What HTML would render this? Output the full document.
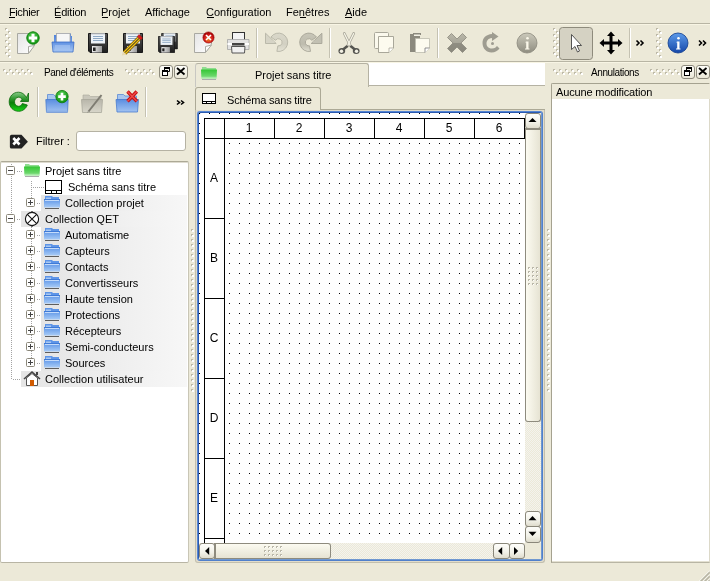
<!DOCTYPE html>
<html><head><meta charset="utf-8">
<style>
*{box-sizing:border-box;margin:0;padding:0}
html,body{width:710px;height:581px;overflow:hidden;background:#ECE9D8;font-family:"Liberation Sans",sans-serif;font-size:11px;color:#000;position:relative}
.a{position:absolute}
.t{position:absolute;white-space:nowrap;line-height:13px;will-change:transform}
.u{position:absolute;height:1px;background:#000}
.ic{position:absolute;overflow:visible}
.vs{position:absolute;width:2px;border-left:1px solid #C5C2B2;border-right:1px solid #fff}
.hg{position:absolute;background-image:linear-gradient(135deg,#fff 0 40%,#C5C2B2 40% 60%,transparent 60%);background-size:3px 3px}
.btn{position:absolute;border:1px solid #8A877A;border-radius:3px;background:linear-gradient(#FEFEFB,#F2F1E8 60%,#DFDCCD)}
.chk{background-color:#F4F3EE;background-image:linear-gradient(45deg,#ECE9D8 25%,transparent 25%,transparent 75%,#ECE9D8 75%),linear-gradient(45deg,#ECE9D8 25%,transparent 25%,transparent 75%,#ECE9D8 75%);background-size:2px 2px;background-position:0 0,1px 1px}
</style></head><body>
<!-- menu -->
<div class="t" style="left:9px;top:6px;letter-spacing:-0.4px">Fichier</div><div class="u" style="left:9px;top:17px;width:6px"></div>
<div class="t" style="left:54px;top:6px;letter-spacing:-0.2px">Édition</div><div class="u" style="left:55px;top:17px;width:6px"></div>
<div class="t" style="left:101px;top:6px">Projet</div><div class="u" style="left:102px;top:17px;width:6px"></div>
<div class="t" style="left:145px;top:6px;letter-spacing:-0.1px">Affichage</div>
<div class="t" style="left:206px;top:6px">Configuration</div><div class="u" style="left:207px;top:17px;width:7px"></div>
<div class="t" style="left:286px;top:6px">Fenêtres</div><div class="u" style="left:300px;top:17px;width:6px"></div>
<div class="t" style="left:345px;top:6px">Aide</div><div class="u" style="left:345px;top:17px;width:7px"></div>
<div class="a" style="left:0;top:23px;width:710px;height:1px;background:#B8B5A4"></div>
<div class="a" style="left:0;top:24px;width:710px;height:1px;background:#F8F5E4"></div>
<div class="a" style="left:0;top:61px;width:710px;height:1px;background:#B8B5A4"></div>
<div class="a" style="left:0;top:62px;width:710px;height:1px;background:#F8F5E4"></div>
<!-- toolbar handles -->
<!-- separators -->
<div class="vs" style="left:256px;top:28px;height:30px"></div>
<div class="vs" style="left:329px;top:28px;height:30px"></div>
<div class="vs" style="left:437px;top:28px;height:30px"></div>
<div class="vs" style="left:629px;top:28px;height:30px"></div>
<svg class="a" style="left:0;top:0" width="710" height="90"><rect x="5" y="28" width="2" height="2" fill="#BDB9A8"/><rect x="6" y="29" width="2" height="2" fill="#fff"/><rect x="8" y="31" width="2" height="2" fill="#BDB9A8"/><rect x="9" y="32" width="2" height="2" fill="#fff"/><rect x="5" y="34" width="2" height="2" fill="#BDB9A8"/><rect x="6" y="35" width="2" height="2" fill="#fff"/><rect x="8" y="37" width="2" height="2" fill="#BDB9A8"/><rect x="9" y="38" width="2" height="2" fill="#fff"/><rect x="5" y="40" width="2" height="2" fill="#BDB9A8"/><rect x="6" y="41" width="2" height="2" fill="#fff"/><rect x="8" y="43" width="2" height="2" fill="#BDB9A8"/><rect x="9" y="44" width="2" height="2" fill="#fff"/><rect x="5" y="46" width="2" height="2" fill="#BDB9A8"/><rect x="6" y="47" width="2" height="2" fill="#fff"/><rect x="8" y="49" width="2" height="2" fill="#BDB9A8"/><rect x="9" y="50" width="2" height="2" fill="#fff"/><rect x="5" y="52" width="2" height="2" fill="#BDB9A8"/><rect x="6" y="53" width="2" height="2" fill="#fff"/><rect x="8" y="55" width="2" height="2" fill="#BDB9A8"/><rect x="9" y="56" width="2" height="2" fill="#fff"/><rect x="553" y="28" width="2" height="2" fill="#BDB9A8"/><rect x="554" y="29" width="2" height="2" fill="#fff"/><rect x="556" y="31" width="2" height="2" fill="#BDB9A8"/><rect x="557" y="32" width="2" height="2" fill="#fff"/><rect x="553" y="34" width="2" height="2" fill="#BDB9A8"/><rect x="554" y="35" width="2" height="2" fill="#fff"/><rect x="556" y="37" width="2" height="2" fill="#BDB9A8"/><rect x="557" y="38" width="2" height="2" fill="#fff"/><rect x="553" y="40" width="2" height="2" fill="#BDB9A8"/><rect x="554" y="41" width="2" height="2" fill="#fff"/><rect x="556" y="43" width="2" height="2" fill="#BDB9A8"/><rect x="557" y="44" width="2" height="2" fill="#fff"/><rect x="553" y="46" width="2" height="2" fill="#BDB9A8"/><rect x="554" y="47" width="2" height="2" fill="#fff"/><rect x="556" y="49" width="2" height="2" fill="#BDB9A8"/><rect x="557" y="50" width="2" height="2" fill="#fff"/><rect x="553" y="52" width="2" height="2" fill="#BDB9A8"/><rect x="554" y="53" width="2" height="2" fill="#fff"/><rect x="556" y="55" width="2" height="2" fill="#BDB9A8"/><rect x="557" y="56" width="2" height="2" fill="#fff"/><rect x="656" y="28" width="2" height="2" fill="#BDB9A8"/><rect x="657" y="29" width="2" height="2" fill="#fff"/><rect x="659" y="31" width="2" height="2" fill="#BDB9A8"/><rect x="660" y="32" width="2" height="2" fill="#fff"/><rect x="656" y="34" width="2" height="2" fill="#BDB9A8"/><rect x="657" y="35" width="2" height="2" fill="#fff"/><rect x="659" y="37" width="2" height="2" fill="#BDB9A8"/><rect x="660" y="38" width="2" height="2" fill="#fff"/><rect x="656" y="40" width="2" height="2" fill="#BDB9A8"/><rect x="657" y="41" width="2" height="2" fill="#fff"/><rect x="659" y="43" width="2" height="2" fill="#BDB9A8"/><rect x="660" y="44" width="2" height="2" fill="#fff"/><rect x="656" y="46" width="2" height="2" fill="#BDB9A8"/><rect x="657" y="47" width="2" height="2" fill="#fff"/><rect x="659" y="49" width="2" height="2" fill="#BDB9A8"/><rect x="660" y="50" width="2" height="2" fill="#fff"/><rect x="656" y="52" width="2" height="2" fill="#BDB9A8"/><rect x="657" y="53" width="2" height="2" fill="#fff"/><rect x="659" y="55" width="2" height="2" fill="#BDB9A8"/><rect x="660" y="56" width="2" height="2" fill="#fff"/><rect x="3" y="69" width="2" height="2" fill="#BDB9A8"/><rect x="4" y="70" width="2" height="2" fill="#fff"/><rect x="6" y="72" width="2" height="2" fill="#BDB9A8"/><rect x="7" y="73" width="2" height="2" fill="#fff"/><rect x="9" y="69" width="2" height="2" fill="#BDB9A8"/><rect x="10" y="70" width="2" height="2" fill="#fff"/><rect x="12" y="72" width="2" height="2" fill="#BDB9A8"/><rect x="13" y="73" width="2" height="2" fill="#fff"/><rect x="15" y="69" width="2" height="2" fill="#BDB9A8"/><rect x="16" y="70" width="2" height="2" fill="#fff"/><rect x="18" y="72" width="2" height="2" fill="#BDB9A8"/><rect x="19" y="73" width="2" height="2" fill="#fff"/><rect x="21" y="69" width="2" height="2" fill="#BDB9A8"/><rect x="22" y="70" width="2" height="2" fill="#fff"/><rect x="24" y="72" width="2" height="2" fill="#BDB9A8"/><rect x="25" y="73" width="2" height="2" fill="#fff"/><rect x="27" y="69" width="2" height="2" fill="#BDB9A8"/><rect x="28" y="70" width="2" height="2" fill="#fff"/><rect x="30" y="72" width="2" height="2" fill="#BDB9A8"/><rect x="31" y="73" width="2" height="2" fill="#fff"/><rect x="125" y="69" width="2" height="2" fill="#BDB9A8"/><rect x="126" y="70" width="2" height="2" fill="#fff"/><rect x="128" y="72" width="2" height="2" fill="#BDB9A8"/><rect x="129" y="73" width="2" height="2" fill="#fff"/><rect x="131" y="69" width="2" height="2" fill="#BDB9A8"/><rect x="132" y="70" width="2" height="2" fill="#fff"/><rect x="134" y="72" width="2" height="2" fill="#BDB9A8"/><rect x="135" y="73" width="2" height="2" fill="#fff"/><rect x="137" y="69" width="2" height="2" fill="#BDB9A8"/><rect x="138" y="70" width="2" height="2" fill="#fff"/><rect x="140" y="72" width="2" height="2" fill="#BDB9A8"/><rect x="141" y="73" width="2" height="2" fill="#fff"/><rect x="143" y="69" width="2" height="2" fill="#BDB9A8"/><rect x="144" y="70" width="2" height="2" fill="#fff"/><rect x="146" y="72" width="2" height="2" fill="#BDB9A8"/><rect x="147" y="73" width="2" height="2" fill="#fff"/><rect x="149" y="69" width="2" height="2" fill="#BDB9A8"/><rect x="150" y="70" width="2" height="2" fill="#fff"/><rect x="152" y="72" width="2" height="2" fill="#BDB9A8"/><rect x="153" y="73" width="2" height="2" fill="#fff"/><rect x="553" y="69" width="2" height="2" fill="#BDB9A8"/><rect x="554" y="70" width="2" height="2" fill="#fff"/><rect x="556" y="72" width="2" height="2" fill="#BDB9A8"/><rect x="557" y="73" width="2" height="2" fill="#fff"/><rect x="559" y="69" width="2" height="2" fill="#BDB9A8"/><rect x="560" y="70" width="2" height="2" fill="#fff"/><rect x="562" y="72" width="2" height="2" fill="#BDB9A8"/><rect x="563" y="73" width="2" height="2" fill="#fff"/><rect x="565" y="69" width="2" height="2" fill="#BDB9A8"/><rect x="566" y="70" width="2" height="2" fill="#fff"/><rect x="568" y="72" width="2" height="2" fill="#BDB9A8"/><rect x="569" y="73" width="2" height="2" fill="#fff"/><rect x="571" y="69" width="2" height="2" fill="#BDB9A8"/><rect x="572" y="70" width="2" height="2" fill="#fff"/><rect x="574" y="72" width="2" height="2" fill="#BDB9A8"/><rect x="575" y="73" width="2" height="2" fill="#fff"/><rect x="577" y="69" width="2" height="2" fill="#BDB9A8"/><rect x="578" y="70" width="2" height="2" fill="#fff"/><rect x="580" y="72" width="2" height="2" fill="#BDB9A8"/><rect x="581" y="73" width="2" height="2" fill="#fff"/><rect x="650" y="69" width="2" height="2" fill="#BDB9A8"/><rect x="651" y="70" width="2" height="2" fill="#fff"/><rect x="653" y="72" width="2" height="2" fill="#BDB9A8"/><rect x="654" y="73" width="2" height="2" fill="#fff"/><rect x="656" y="69" width="2" height="2" fill="#BDB9A8"/><rect x="657" y="70" width="2" height="2" fill="#fff"/><rect x="659" y="72" width="2" height="2" fill="#BDB9A8"/><rect x="660" y="73" width="2" height="2" fill="#fff"/><rect x="662" y="69" width="2" height="2" fill="#BDB9A8"/><rect x="663" y="70" width="2" height="2" fill="#fff"/><rect x="665" y="72" width="2" height="2" fill="#BDB9A8"/><rect x="666" y="73" width="2" height="2" fill="#fff"/><rect x="668" y="69" width="2" height="2" fill="#BDB9A8"/><rect x="669" y="70" width="2" height="2" fill="#fff"/><rect x="671" y="72" width="2" height="2" fill="#BDB9A8"/><rect x="672" y="73" width="2" height="2" fill="#fff"/><rect x="674" y="69" width="2" height="2" fill="#BDB9A8"/><rect x="675" y="70" width="2" height="2" fill="#fff"/><rect x="677" y="72" width="2" height="2" fill="#BDB9A8"/><rect x="678" y="73" width="2" height="2" fill="#fff"/></svg>
<svg class="a" style="left:0;top:0" width="710" height="120" viewBox="0 0 710 120">
<defs>
<linearGradient id="pg" x1="0" y1="0" x2="1" y2="1"><stop offset="0" stop-color="#E4E4E4"/><stop offset="1" stop-color="#FFFFFF"/></linearGradient>
<radialGradient id="gg" cx="0.45" cy="0.35" r="0.6"><stop offset="0" stop-color="#5DD35D"/><stop offset="1" stop-color="#129612"/></radialGradient>
<radialGradient id="rg" cx="0.5" cy="0.65" r="0.6"><stop offset="0" stop-color="#F08A20"/><stop offset="0.6" stop-color="#D42020"/><stop offset="1" stop-color="#A00000"/></radialGradient>
<linearGradient id="bf" x1="0" y1="0" x2="0" y2="1"><stop offset="0" stop-color="#5E90E2"/><stop offset="1" stop-color="#A9C8F4"/></linearGradient>
<linearGradient id="bfb" x1="0" y1="0" x2="0" y2="1"><stop offset="0" stop-color="#4A7FD8"/><stop offset="1" stop-color="#6F9BE6"/></linearGradient>
<linearGradient id="fl" x1="0" y1="0" x2="0" y2="1"><stop offset="0" stop-color="#555"/><stop offset="1" stop-color="#1E1E1E"/></linearGradient>
<linearGradient id="sh" x1="0" y1="0" x2="1" y2="0"><stop offset="0" stop-color="#F2F2F2"/><stop offset="1" stop-color="#9A9A9A"/></linearGradient>
<linearGradient id="gy" x1="0" y1="0" x2="0" y2="1"><stop offset="0" stop-color="#CBC9BB"/><stop offset="1" stop-color="#8F8D80"/></linearGradient>
<linearGradient id="gy2" x1="0" y1="0" x2="0" y2="1"><stop offset="0" stop-color="#B9B7A9"/><stop offset="0.5" stop-color="#A8A699"/><stop offset="0.5" stop-color="#8F8D82"/><stop offset="1" stop-color="#8A887C"/></linearGradient>
<linearGradient id="bl" x1="0" y1="0" x2="0" y2="1"><stop offset="0" stop-color="#5D9BEA"/><stop offset="1" stop-color="#1547A8"/></linearGradient>
<symbol id="floppy" viewBox="0 0 20 20">
<path d="M0.5 0.5H19.5V19.5H2L0.5 18Z" fill="url(#fl)" stroke="#1A1A1A" stroke-width="1"/>
<rect x="3" y="0.5" width="14" height="10" fill="#EEF3F8"/>
<rect x="3" y="0.5" width="14" height="1" fill="#C8CCD0"/>
<rect x="5" y="3" width="10" height="1" fill="#8FA9C4"/><rect x="5" y="5" width="10" height="1" fill="#8FA9C4"/><rect x="5" y="7" width="10" height="1" fill="#8FA9C4"/>
<rect x="4" y="13" width="10" height="6.5" fill="url(#sh)"/>
<rect x="5" y="14.5" width="2.6" height="3.5" fill="#222"/>
</symbol>
</defs>
<!-- new -->
<path d="M17.5 33.5H32L34.5 36V45L28.5 53.5H17.5Z" fill="url(#pg)" stroke="#A9A9A2" stroke-width="1"/>
<path d="M28.5 53.5L28.5 46.5L34.5 45.5Z" fill="#FDFDFD" stroke="#A9A9A2" stroke-width="1"/>
<circle cx="33" cy="38" r="6.2" fill="url(#gg)" stroke="#0A800A" stroke-width="1"/>
<path d="M33 33.8V42.2M28.8 38H37.2" stroke="#fff" stroke-width="3"/>
<!-- open -->
<path d="M54 35H57V33.5H71V36H72V43H54Z" fill="url(#bfb)"/>
<rect x="56.5" y="33.5" width="13.5" height="9.5" fill="#F6F6F6" stroke="#AAA" stroke-width="0.8"/>
<path d="M52 42H74L73 52H53Z" fill="url(#bf)" stroke="#3E6FC7" stroke-width="0.8"/>
<rect x="55" y="45" width="15" height="5" fill="#A9C7F2" opacity="0.6"/>
<!-- save -->
<use href="#floppy" x="88" y="33" width="20" height="20"/>
<!-- save as -->
<use href="#floppy" x="123" y="33" width="20" height="20"/>
<path d="M124.5 53L139 38.5" stroke="#6A5000" stroke-width="4.6" stroke-linecap="butt"/>
<path d="M124.5 53L139 38.5" stroke="#F2C21A" stroke-width="3.4"/>
<path d="M124.8 52.7L139.3 38.2" stroke="#1A1A1A" stroke-width="1"/>
<path d="M137.2 36.4L139.2 34.6L142.6 38L140.8 40Z" fill="#D81C1C" stroke="#901010" stroke-width="0.5"/>
<path d="M121.8 55.5L123 51.2L126.3 54.5Z" fill="#E8D9B0"/>
<!-- save all -->
<use href="#floppy" x="161" y="33" width="17" height="16.5"/>
<use href="#floppy" x="158" y="36" width="17" height="17"/>
<!-- close -->
<path d="M194.5 33.5H208L211.5 37V44L205.5 52.5H194.5Z" fill="url(#pg)" stroke="#A9A9A2" stroke-width="1"/>
<path d="M205.5 52.5L205.5 46.5L211.5 45Z" fill="#FDFDFD" stroke="#A9A9A2" stroke-width="1"/>
<circle cx="208.5" cy="37.5" r="5.6" fill="url(#rg)" stroke="#9A0000" stroke-width="0.6"/>
<path d="M206 35L211 40M211 35L206 40" stroke="#fff" stroke-width="1.6"/>
<!-- print -->
<rect x="232.5" y="32.5" width="12" height="9" fill="#F4F4F4" stroke="#333" stroke-width="1"/>
<path d="M227.5 39.5H249V49.5H227.5Z" fill="#E2E2E2" stroke="#A4A4A4" stroke-width="0.8"/>
<rect x="227.5" y="43" width="21.5" height="2" fill="#FFFFFF"/>
<rect x="232" y="43" width="12.5" height="2.5" fill="#444"/>
<path d="M231.5 46.5H245L244.5 53H232Z" fill="#F0F0F0" stroke="#555" stroke-width="1"/>
<!-- undo -->
<defs><linearGradient id="ug" x1="0" y1="0" x2="0" y2="1"><stop offset="0" stop-color="#DAD8CA"/><stop offset="0.6" stop-color="#D2D0C2"/><stop offset="1" stop-color="#E6E4D6"/></linearGradient><linearGradient id="rg2" x1="0" y1="0" x2="0" y2="1"><stop offset="0" stop-color="#C8C6B8"/><stop offset="0.6" stop-color="#BDBBAD"/><stop offset="1" stop-color="#E2E0D2"/></linearGradient></defs>
<path d="M270.96 37.02A9.2 9.2 0 1 1 276.90 51.36L277.87 45.85A3.6 3.6 0 1 0 275.55 40.24Z" fill="url(#ug)" stroke="#B6B4A6" stroke-width="0.9"/><path d="M265.5 33.2L265.5 43.5L276.2 43.5Z" fill="#D6D4C6" stroke="#B6B4A6" stroke-width="0.9" stroke-linejoin="round"/><path d="M268 41.5L274.5 41.5" stroke="#D6D4C6" stroke-width="2"/>
<!-- redo -->
<g transform="translate(587.4,0) scale(-1,1)"><path d="M270.96 37.02A9.2 9.2 0 1 1 276.90 51.36L277.87 45.85A3.6 3.6 0 1 0 275.55 40.24Z" fill="url(#rg2)" stroke="#A6A496" stroke-width="0.9"/><path d="M265.5 33.2L265.5 43.5L276.2 43.5Z" fill="#C2C0B2" stroke="#A6A496" stroke-width="0.9" stroke-linejoin="round"/><path d="M268 41.5L274.5 41.5" stroke="#C2C0B2" stroke-width="2"/></g>
<!-- cut -->
<path d="M344.3 33.5L350.5 46M353.7 33.5L347.5 46" stroke="#A9A79A" stroke-width="2.8" stroke-linecap="round"/>
<path d="M344.3 33.5L350.5 46M353.7 33.5L347.5 46" stroke="#FBF9EC" stroke-width="1.1" stroke-linecap="round"/>
<path d="M342.5 50L346.8 46.6M355.5 50L351.2 46.6" stroke="#555550" stroke-width="2.6" stroke-linecap="round"/>
<ellipse cx="341.8" cy="51" rx="3.4" ry="3" fill="#555550"/><ellipse cx="356.2" cy="51" rx="3.4" ry="3" fill="#555550"/>
<circle cx="341.5" cy="51.2" r="1.7" fill="#F2F0E4"/><circle cx="356.5" cy="51.2" r="1.7" fill="#F2F0E4"/>
<!-- copy -->
<rect x="374.5" y="32.5" width="14" height="16" rx="1" fill="#FBF9ED" stroke="#A9A79A" stroke-width="1"/>
<path d="M378.5 36.5H393.5V48L389 52.5H378.5Z" fill="#FDFBEF" stroke="#A9A79A" stroke-width="1"/>
<path d="M389 52.5V48H393.5" fill="#fff" stroke="#A9A79A" stroke-width="0.8"/>
<!-- paste -->
<rect x="410" y="34" width="10" height="18" fill="#8C8A7E"/>
<rect x="413" y="33" width="8" height="2" fill="#8C8A7E"/>
<rect x="414" y="34.5" width="6" height="1.5" fill="#F4F2E6"/>
<path d="M415.5 38.5H429.5V48L425 52.5H415.5Z" fill="#FDFBEF" stroke="#BDBBAE" stroke-width="0.8"/>
<path d="M425 52.5V48H429.5" fill="#fff" stroke="#777" stroke-width="0.8"/>
<!-- delete -->
<path d="M447.5 37.5L451.5 33.5L457 39L462.5 33.5L466.5 37.5L461 43L466.5 48.5L462.5 52.5L457 47L451.5 52.5L447.5 48.5L453 43Z" fill="url(#gy2)" stroke="#8B897D" stroke-width="0.8"/>
<!-- rotate -->
<path d="M492 34V38C487.5 38 486.5 42 486.5 43.5C486.5 47 489 48.5 492 48.5C495 48.5 496 47 497 46L499.5 48.5C498 50.5 495 52.5 491.5 52.5C486.5 52.5 482.5 48.5 482.5 43C482.5 38 486 34.5 492 34Z" fill="#9E9C90"/>
<path d="M492 32V41L498.5 36.5Z" fill="#9E9C90"/>
<circle cx="492.5" cy="43.5" r="1.5" fill="#9E9C90"/>
<!-- info grey -->
<circle cx="527" cy="43" r="10" fill="url(#gy)" stroke="#8A887C" stroke-width="0.8"/>
<path d="M526 41.5H528.5V48.5H529.5V49.5H525V48.5H526.2V42.5H525.2Z" fill="#FBF8EA"/>
<circle cx="527.5" cy="38.3" r="1.3" fill="#FBF8EA"/>
<!-- select toggle -->
<rect x="559.5" y="27.5" width="33" height="32" rx="3" fill="#D5D2C3" stroke="#8E8B7C" stroke-width="1"/>
<path d="M571.5 34.5V49.5L575 46.5L577.5 52L579.5 51L577 45.5H581.5Z" fill="#fff" stroke="#444" stroke-width="0.9" stroke-linejoin="round"/>
<!-- move -->
<path d="M611 31.5L615 36H612.5V41.5H618V39L622.5 43L618 47V44.5H612.5V50H615L611 54.5L607 50H609.5V44.5H604V47L599.5 43L604 39V41.5H609.5V36H607Z" fill="#000"/>
<!-- chevrons -->
<path d="M636.5 40.5L639 43L636.5 45.5M640.5 40.5L643 43L640.5 45.5" fill="none" stroke="#000" stroke-width="1.6"/>
<path d="M699 40.5L701.5 43L699 45.5M703 40.5L705.5 43L703 45.5" fill="none" stroke="#000" stroke-width="1.6"/>
<!-- info blue -->
<circle cx="678" cy="43" r="10" fill="url(#bl)" stroke="#0B3A8E" stroke-width="0.8"/>
<path d="M677 41.5H679.5V48.5H680.5V49.5H676V48.5H677.2V42.5H676.2Z" fill="#fff"/>
<circle cx="678.5" cy="38.3" r="1.3" fill="#fff"/>
</svg>
<!-- left dock title -->
<div class="t" style="left:44px;top:66px;font-size:10px;letter-spacing:-0.45px">Panel d'éléments</div>
<div class="t" style="left:591px;top:66px;font-size:10px;letter-spacing:-0.4px">Annulations</div>
<svg class="a" style="left:0;top:0" width="710" height="581">
<defs><linearGradient id="db" x1="0" y1="0" x2="0" y2="1"><stop offset="0" stop-color="#FFFFFB"/><stop offset="1" stop-color="#E9E6D6"/></linearGradient></defs>
<rect x="159.5" y="65.5" width="13" height="13" rx="2.5" fill="url(#db)" stroke="#8D8A7D"/>
<rect x="174.5" y="65.5" width="13" height="13" rx="2.5" fill="url(#db)" stroke="#8D8A7D"/>
<path d="M164.5 67.5H169.5V71.5H167.5M164.5 67.5V70" fill="none" stroke="#000" stroke-width="1"/><rect x="164" y="67" width="6" height="2" fill="#000"/>
<rect x="162.5" y="70.5" width="5" height="5" fill="#fff" stroke="#000" stroke-width="1"/><rect x="162" y="70" width="6" height="2" fill="#000"/>
<path d="M177 68L184.5 74.5M184.5 68L177 74.5" stroke="#000" stroke-width="1.8"/>
<!-- right dock buttons -->
<rect x="681.5" y="65.5" width="13" height="13" rx="2.5" fill="url(#db)" stroke="#8D8A7D"/>
<path d="M686.5 67.5H691.5V71.5H689.5M686.5 67.5V70" fill="none" stroke="#000" stroke-width="1"/><rect x="686" y="67" width="6" height="2" fill="#000"/>
<rect x="684.5" y="70.5" width="5" height="5" fill="#fff" stroke="#000" stroke-width="1"/><rect x="684" y="70" width="6" height="2" fill="#000"/>
<rect x="696.5" y="65.5" width="13" height="13" rx="2.5" fill="url(#db)" stroke="#8D8A7D"/>
<path d="M699 68L706.5 74.5M706.5 68L699 74.5" stroke="#000" stroke-width="1.8"/>
</svg>
<svg class="a" style="left:0;top:0" width="200" height="160">
<defs>
<linearGradient id="rf" x1="0" y1="0" x2="0" y2="1"><stop offset="0" stop-color="#8ACB8A"/><stop offset="0.3" stop-color="#3A9E3A"/><stop offset="0.55" stop-color="#0A7E0A"/><stop offset="1" stop-color="#16D616"/></linearGradient>
<linearGradient id="fb2" x1="0" y1="0" x2="0" y2="1"><stop offset="0" stop-color="#5B8EE0"/><stop offset="1" stop-color="#A2C3F2"/></linearGradient>
<linearGradient id="fgr" x1="0" y1="0" x2="0" y2="1"><stop offset="0" stop-color="#B8B6AA"/><stop offset="1" stop-color="#D8D6CA"/></linearGradient>
<radialGradient id="gg2" cx="0.45" cy="0.35" r="0.6"><stop offset="0" stop-color="#5DD35D"/><stop offset="1" stop-color="#129612"/></radialGradient>
</defs>
<!-- refresh -->
<path d="M26.5 97.5C24.5 94 21.5 92.2 18.5 92.2C13 92.2 9.2 96.5 9.2 101.8C9.2 107 13.3 111.3 18.5 111.3C23 111.3 26.2 108.2 27.3 105L22.3 103.5C21.6 105.3 20 106.3 18.5 106.3C16 106.3 14.5 104 14.5 101.8C14.5 99.3 16.3 97.2 18.6 97.2C20 97.2 21.3 98 22 99.3L20.5 101.5H28.5V93Z" fill="url(#rf)" stroke="#0A6A0A" stroke-width="0.8"/>
<!-- sep -->
<rect x="37" y="87" width="1" height="30" fill="#C5C2B2"/><rect x="38" y="87" width="1" height="30" fill="#fff"/>
<rect x="145" y="87" width="1" height="30" fill="#C5C2B2"/><rect x="146" y="87" width="1" height="30" fill="#fff"/>
<!-- folder + -->
<path d="M47.5 94.5H53.5L55 96H66.5V100H47.5Z" fill="#A9C6EE" stroke="#5C8BD6" stroke-width="0.8"/>
<path d="M45.8 99.5H68.2L67.5 112.3H46.5Z" fill="url(#fb2)" stroke="#4A7CCF" stroke-width="0.8"/>
<rect x="46.5" y="110.5" width="21" height="1.6" fill="#8AAFE6"/>
<circle cx="62" cy="96.6" r="6.2" fill="url(#gg2)" stroke="#0A7A0A" stroke-width="0.8"/>
<path d="M62 92.8V100.4M58.2 96.6H65.8" stroke="#fff" stroke-width="2.6"/>
<!-- grey folder edit -->
<path d="M83 95H89L90.5 96.5H101V100H83Z" fill="#C9C7BB" stroke="#AAA89C" stroke-width="0.6"/>
<path d="M81.5 99.5H102.5L101.5 112.5H82.5Z" fill="url(#fgr)" stroke="#AAA89C" stroke-width="0.8"/>
<path d="M88.5 111.5L101.5 95" stroke="#7E7C72" stroke-width="2"/>
<path d="M87.5 113L88.5 111" stroke="#9E9C92" stroke-width="1"/>
<!-- folder x -->
<path d="M117.5 94.5H123.5L125 96H136.5V100H117.5Z" fill="#A9C6EE" stroke="#5C8BD6" stroke-width="0.8"/>
<path d="M116 99.5H138.5L137.5 112H117Z" fill="url(#fb2)" stroke="#4A7CCF" stroke-width="0.8"/>
<path d="M127.5 91.5L136.8 101.2M136.8 91.5L127.5 101.2" stroke="#C80E0E" stroke-width="3.4"/><path d="M127.5 91.5L136.8 101.2M136.8 91.5L127.5 101.2" stroke="#EC4A4A" stroke-width="1.4"/>
<!-- chevron -->
<path d="M177 100.5L179.5 102.5L177 104.5M181 100.5L183.5 102.5L181 104.5" fill="none" stroke="#000" stroke-width="1.6"/>
<!-- clear filter -->
<path d="M11.5 134.8H21.5L27.9 141.7L21.5 148.6H11.5Q9.9 148.6 9.9 147V136.4Q9.9 134.8 11.5 134.8Z" fill="#222"/>
<path d="M13.3 138L19.5 144.5M19.5 138L13.3 144.5" stroke="#fff" stroke-width="2.6"/>
</svg>
<div class="t" style="left:36px;top:135px;letter-spacing:-0.05px">Filtrer :</div>
<div class="a" style="left:76px;top:131px;width:110px;height:20px;background:#fff;border:1px solid #B5B2A3;border-radius:3px"></div>
<!-- tree -->
<div class="a" style="left:0;top:161px;width:189px;height:402px;background:#fff;border:1px solid #ACA996;border-left-color:#C5C2B0;border-right-color:#C9C6B6;border-bottom-color:#B8B5A4;border-radius:2px;box-shadow:inset 0 1px 0 #DEDBCF"></div>
<svg class="a" style="left:0;top:0" width="710" height="581"><defs><linearGradient id="hl" x1="0" y1="0" x2="1" y2="0"><stop offset="0" stop-color="#E5E5E5"/><stop offset="1" stop-color="#F7F7F7"/></linearGradient><linearGradient id="tf" x1="0" y1="0" x2="0" y2="1"><stop offset="0" stop-color="#5B93E6"/><stop offset="1" stop-color="#A8CBF6"/></linearGradient><linearGradient id="tfg" x1="0" y1="0" x2="0" y2="1"><stop offset="0" stop-color="#34C634"/><stop offset="0.75" stop-color="#6ED86E"/><stop offset="0.8" stop-color="#9FE69F"/><stop offset="1" stop-color="#A8EAA8"/></linearGradient></defs><rect x="11" y="164" width="1" height="1" fill="#A3A3A3"/><rect x="11" y="166" width="1" height="1" fill="#A3A3A3"/><rect x="11" y="168" width="1" height="1" fill="#A3A3A3"/><rect x="11" y="170" width="1" height="1" fill="#A3A3A3"/><rect x="11" y="172" width="1" height="1" fill="#A3A3A3"/><rect x="11" y="174" width="1" height="1" fill="#A3A3A3"/><rect x="11" y="176" width="1" height="1" fill="#A3A3A3"/><rect x="11" y="178" width="1" height="1" fill="#A3A3A3"/><rect x="11" y="180" width="1" height="1" fill="#A3A3A3"/><rect x="11" y="182" width="1" height="1" fill="#A3A3A3"/><rect x="11" y="184" width="1" height="1" fill="#A3A3A3"/><rect x="11" y="186" width="1" height="1" fill="#A3A3A3"/><rect x="11" y="188" width="1" height="1" fill="#A3A3A3"/><rect x="11" y="190" width="1" height="1" fill="#A3A3A3"/><rect x="11" y="192" width="1" height="1" fill="#A3A3A3"/><rect x="11" y="194" width="1" height="1" fill="#A3A3A3"/><rect x="11" y="196" width="1" height="1" fill="#A3A3A3"/><rect x="11" y="198" width="1" height="1" fill="#A3A3A3"/><rect x="11" y="200" width="1" height="1" fill="#A3A3A3"/><rect x="11" y="202" width="1" height="1" fill="#A3A3A3"/><rect x="11" y="204" width="1" height="1" fill="#A3A3A3"/><rect x="11" y="206" width="1" height="1" fill="#A3A3A3"/><rect x="11" y="208" width="1" height="1" fill="#A3A3A3"/><rect x="11" y="210" width="1" height="1" fill="#A3A3A3"/><rect x="11" y="212" width="1" height="1" fill="#A3A3A3"/><rect x="11" y="214" width="1" height="1" fill="#A3A3A3"/><rect x="11" y="216" width="1" height="1" fill="#A3A3A3"/><rect x="11" y="218" width="1" height="1" fill="#A3A3A3"/><rect x="11" y="220" width="1" height="1" fill="#A3A3A3"/><rect x="11" y="222" width="1" height="1" fill="#A3A3A3"/><rect x="11" y="224" width="1" height="1" fill="#A3A3A3"/><rect x="11" y="226" width="1" height="1" fill="#A3A3A3"/><rect x="11" y="228" width="1" height="1" fill="#A3A3A3"/><rect x="11" y="230" width="1" height="1" fill="#A3A3A3"/><rect x="11" y="232" width="1" height="1" fill="#A3A3A3"/><rect x="11" y="234" width="1" height="1" fill="#A3A3A3"/><rect x="11" y="236" width="1" height="1" fill="#A3A3A3"/><rect x="11" y="238" width="1" height="1" fill="#A3A3A3"/><rect x="11" y="240" width="1" height="1" fill="#A3A3A3"/><rect x="11" y="242" width="1" height="1" fill="#A3A3A3"/><rect x="11" y="244" width="1" height="1" fill="#A3A3A3"/><rect x="11" y="246" width="1" height="1" fill="#A3A3A3"/><rect x="11" y="248" width="1" height="1" fill="#A3A3A3"/><rect x="11" y="250" width="1" height="1" fill="#A3A3A3"/><rect x="11" y="252" width="1" height="1" fill="#A3A3A3"/><rect x="11" y="254" width="1" height="1" fill="#A3A3A3"/><rect x="11" y="256" width="1" height="1" fill="#A3A3A3"/><rect x="11" y="258" width="1" height="1" fill="#A3A3A3"/><rect x="11" y="260" width="1" height="1" fill="#A3A3A3"/><rect x="11" y="262" width="1" height="1" fill="#A3A3A3"/><rect x="11" y="264" width="1" height="1" fill="#A3A3A3"/><rect x="11" y="266" width="1" height="1" fill="#A3A3A3"/><rect x="11" y="268" width="1" height="1" fill="#A3A3A3"/><rect x="11" y="270" width="1" height="1" fill="#A3A3A3"/><rect x="11" y="272" width="1" height="1" fill="#A3A3A3"/><rect x="11" y="274" width="1" height="1" fill="#A3A3A3"/><rect x="11" y="276" width="1" height="1" fill="#A3A3A3"/><rect x="11" y="278" width="1" height="1" fill="#A3A3A3"/><rect x="11" y="280" width="1" height="1" fill="#A3A3A3"/><rect x="11" y="282" width="1" height="1" fill="#A3A3A3"/><rect x="11" y="284" width="1" height="1" fill="#A3A3A3"/><rect x="11" y="286" width="1" height="1" fill="#A3A3A3"/><rect x="11" y="288" width="1" height="1" fill="#A3A3A3"/><rect x="11" y="290" width="1" height="1" fill="#A3A3A3"/><rect x="11" y="292" width="1" height="1" fill="#A3A3A3"/><rect x="11" y="294" width="1" height="1" fill="#A3A3A3"/><rect x="11" y="296" width="1" height="1" fill="#A3A3A3"/><rect x="11" y="298" width="1" height="1" fill="#A3A3A3"/><rect x="11" y="300" width="1" height="1" fill="#A3A3A3"/><rect x="11" y="302" width="1" height="1" fill="#A3A3A3"/><rect x="11" y="304" width="1" height="1" fill="#A3A3A3"/><rect x="11" y="306" width="1" height="1" fill="#A3A3A3"/><rect x="11" y="308" width="1" height="1" fill="#A3A3A3"/><rect x="11" y="310" width="1" height="1" fill="#A3A3A3"/><rect x="11" y="312" width="1" height="1" fill="#A3A3A3"/><rect x="11" y="314" width="1" height="1" fill="#A3A3A3"/><rect x="11" y="316" width="1" height="1" fill="#A3A3A3"/><rect x="11" y="318" width="1" height="1" fill="#A3A3A3"/><rect x="11" y="320" width="1" height="1" fill="#A3A3A3"/><rect x="11" y="322" width="1" height="1" fill="#A3A3A3"/><rect x="11" y="324" width="1" height="1" fill="#A3A3A3"/><rect x="11" y="326" width="1" height="1" fill="#A3A3A3"/><rect x="11" y="328" width="1" height="1" fill="#A3A3A3"/><rect x="11" y="330" width="1" height="1" fill="#A3A3A3"/><rect x="11" y="332" width="1" height="1" fill="#A3A3A3"/><rect x="11" y="334" width="1" height="1" fill="#A3A3A3"/><rect x="11" y="336" width="1" height="1" fill="#A3A3A3"/><rect x="11" y="338" width="1" height="1" fill="#A3A3A3"/><rect x="11" y="340" width="1" height="1" fill="#A3A3A3"/><rect x="11" y="342" width="1" height="1" fill="#A3A3A3"/><rect x="11" y="344" width="1" height="1" fill="#A3A3A3"/><rect x="11" y="346" width="1" height="1" fill="#A3A3A3"/><rect x="11" y="348" width="1" height="1" fill="#A3A3A3"/><rect x="11" y="350" width="1" height="1" fill="#A3A3A3"/><rect x="11" y="352" width="1" height="1" fill="#A3A3A3"/><rect x="11" y="354" width="1" height="1" fill="#A3A3A3"/><rect x="11" y="356" width="1" height="1" fill="#A3A3A3"/><rect x="11" y="358" width="1" height="1" fill="#A3A3A3"/><rect x="11" y="360" width="1" height="1" fill="#A3A3A3"/><rect x="11" y="362" width="1" height="1" fill="#A3A3A3"/><rect x="11" y="364" width="1" height="1" fill="#A3A3A3"/><rect x="11" y="366" width="1" height="1" fill="#A3A3A3"/><rect x="11" y="368" width="1" height="1" fill="#A3A3A3"/><rect x="11" y="370" width="1" height="1" fill="#A3A3A3"/><rect x="11" y="372" width="1" height="1" fill="#A3A3A3"/><rect x="11" y="374" width="1" height="1" fill="#A3A3A3"/><rect x="11" y="376" width="1" height="1" fill="#A3A3A3"/><rect x="11" y="378" width="1" height="1" fill="#A3A3A3"/><rect x="17" y="171" width="1" height="1" fill="#A3A3A3"/><rect x="19" y="171" width="1" height="1" fill="#A3A3A3"/><rect x="21" y="171" width="1" height="1" fill="#A3A3A3"/><rect x="17" y="219" width="1" height="1" fill="#A3A3A3"/><rect x="19" y="219" width="1" height="1" fill="#A3A3A3"/><rect x="21" y="219" width="1" height="1" fill="#A3A3A3"/><rect x="13" y="379" width="1" height="1" fill="#A3A3A3"/><rect x="15" y="379" width="1" height="1" fill="#A3A3A3"/><rect x="17" y="379" width="1" height="1" fill="#A3A3A3"/><rect x="19" y="379" width="1" height="1" fill="#A3A3A3"/><rect x="21" y="379" width="1" height="1" fill="#A3A3A3"/><rect x="31" y="181" width="1" height="1" fill="#A3A3A3"/><rect x="31" y="183" width="1" height="1" fill="#A3A3A3"/><rect x="31" y="185" width="1" height="1" fill="#A3A3A3"/><rect x="31" y="187" width="1" height="1" fill="#A3A3A3"/><rect x="31" y="189" width="1" height="1" fill="#A3A3A3"/><rect x="31" y="191" width="1" height="1" fill="#A3A3A3"/><rect x="31" y="193" width="1" height="1" fill="#A3A3A3"/><rect x="31" y="195" width="1" height="1" fill="#A3A3A3"/><rect x="31" y="197" width="1" height="1" fill="#A3A3A3"/><rect x="31" y="199" width="1" height="1" fill="#A3A3A3"/><rect x="31" y="201" width="1" height="1" fill="#A3A3A3"/><rect x="31" y="203" width="1" height="1" fill="#A3A3A3"/><rect x="31" y="227" width="1" height="1" fill="#A3A3A3"/><rect x="31" y="229" width="1" height="1" fill="#A3A3A3"/><rect x="31" y="231" width="1" height="1" fill="#A3A3A3"/><rect x="31" y="233" width="1" height="1" fill="#A3A3A3"/><rect x="31" y="235" width="1" height="1" fill="#A3A3A3"/><rect x="31" y="237" width="1" height="1" fill="#A3A3A3"/><rect x="31" y="239" width="1" height="1" fill="#A3A3A3"/><rect x="31" y="241" width="1" height="1" fill="#A3A3A3"/><rect x="31" y="243" width="1" height="1" fill="#A3A3A3"/><rect x="31" y="245" width="1" height="1" fill="#A3A3A3"/><rect x="31" y="247" width="1" height="1" fill="#A3A3A3"/><rect x="31" y="249" width="1" height="1" fill="#A3A3A3"/><rect x="31" y="251" width="1" height="1" fill="#A3A3A3"/><rect x="31" y="253" width="1" height="1" fill="#A3A3A3"/><rect x="31" y="255" width="1" height="1" fill="#A3A3A3"/><rect x="31" y="257" width="1" height="1" fill="#A3A3A3"/><rect x="31" y="259" width="1" height="1" fill="#A3A3A3"/><rect x="31" y="261" width="1" height="1" fill="#A3A3A3"/><rect x="31" y="263" width="1" height="1" fill="#A3A3A3"/><rect x="31" y="265" width="1" height="1" fill="#A3A3A3"/><rect x="31" y="267" width="1" height="1" fill="#A3A3A3"/><rect x="31" y="269" width="1" height="1" fill="#A3A3A3"/><rect x="31" y="271" width="1" height="1" fill="#A3A3A3"/><rect x="31" y="273" width="1" height="1" fill="#A3A3A3"/><rect x="31" y="275" width="1" height="1" fill="#A3A3A3"/><rect x="31" y="277" width="1" height="1" fill="#A3A3A3"/><rect x="31" y="279" width="1" height="1" fill="#A3A3A3"/><rect x="31" y="281" width="1" height="1" fill="#A3A3A3"/><rect x="31" y="283" width="1" height="1" fill="#A3A3A3"/><rect x="31" y="285" width="1" height="1" fill="#A3A3A3"/><rect x="31" y="287" width="1" height="1" fill="#A3A3A3"/><rect x="31" y="289" width="1" height="1" fill="#A3A3A3"/><rect x="31" y="291" width="1" height="1" fill="#A3A3A3"/><rect x="31" y="293" width="1" height="1" fill="#A3A3A3"/><rect x="31" y="295" width="1" height="1" fill="#A3A3A3"/><rect x="31" y="297" width="1" height="1" fill="#A3A3A3"/><rect x="31" y="299" width="1" height="1" fill="#A3A3A3"/><rect x="31" y="301" width="1" height="1" fill="#A3A3A3"/><rect x="31" y="303" width="1" height="1" fill="#A3A3A3"/><rect x="31" y="305" width="1" height="1" fill="#A3A3A3"/><rect x="31" y="307" width="1" height="1" fill="#A3A3A3"/><rect x="31" y="309" width="1" height="1" fill="#A3A3A3"/><rect x="31" y="311" width="1" height="1" fill="#A3A3A3"/><rect x="31" y="313" width="1" height="1" fill="#A3A3A3"/><rect x="31" y="315" width="1" height="1" fill="#A3A3A3"/><rect x="31" y="317" width="1" height="1" fill="#A3A3A3"/><rect x="31" y="319" width="1" height="1" fill="#A3A3A3"/><rect x="31" y="321" width="1" height="1" fill="#A3A3A3"/><rect x="31" y="323" width="1" height="1" fill="#A3A3A3"/><rect x="31" y="325" width="1" height="1" fill="#A3A3A3"/><rect x="31" y="327" width="1" height="1" fill="#A3A3A3"/><rect x="31" y="329" width="1" height="1" fill="#A3A3A3"/><rect x="31" y="331" width="1" height="1" fill="#A3A3A3"/><rect x="31" y="333" width="1" height="1" fill="#A3A3A3"/><rect x="31" y="335" width="1" height="1" fill="#A3A3A3"/><rect x="31" y="337" width="1" height="1" fill="#A3A3A3"/><rect x="31" y="339" width="1" height="1" fill="#A3A3A3"/><rect x="31" y="341" width="1" height="1" fill="#A3A3A3"/><rect x="31" y="343" width="1" height="1" fill="#A3A3A3"/><rect x="31" y="345" width="1" height="1" fill="#A3A3A3"/><rect x="31" y="347" width="1" height="1" fill="#A3A3A3"/><rect x="31" y="349" width="1" height="1" fill="#A3A3A3"/><rect x="31" y="351" width="1" height="1" fill="#A3A3A3"/><rect x="31" y="353" width="1" height="1" fill="#A3A3A3"/><rect x="31" y="355" width="1" height="1" fill="#A3A3A3"/><rect x="31" y="357" width="1" height="1" fill="#A3A3A3"/><rect x="31" y="359" width="1" height="1" fill="#A3A3A3"/><rect x="31" y="361" width="1" height="1" fill="#A3A3A3"/><rect x="31" y="363" width="1" height="1" fill="#A3A3A3"/><rect x="33" y="187" width="1" height="1" fill="#A3A3A3"/><rect x="35" y="187" width="1" height="1" fill="#A3A3A3"/><rect x="37" y="187" width="1" height="1" fill="#A3A3A3"/><rect x="39" y="187" width="1" height="1" fill="#A3A3A3"/><rect x="41" y="187" width="1" height="1" fill="#A3A3A3"/><rect x="43" y="187" width="1" height="1" fill="#A3A3A3"/><rect x="37" y="203" width="1" height="1" fill="#A3A3A3"/><rect x="39" y="203" width="1" height="1" fill="#A3A3A3"/><rect x="41" y="203" width="1" height="1" fill="#A3A3A3"/><rect x="37" y="235" width="1" height="1" fill="#A3A3A3"/><rect x="39" y="235" width="1" height="1" fill="#A3A3A3"/><rect x="41" y="235" width="1" height="1" fill="#A3A3A3"/><rect x="37" y="251" width="1" height="1" fill="#A3A3A3"/><rect x="39" y="251" width="1" height="1" fill="#A3A3A3"/><rect x="41" y="251" width="1" height="1" fill="#A3A3A3"/><rect x="37" y="267" width="1" height="1" fill="#A3A3A3"/><rect x="39" y="267" width="1" height="1" fill="#A3A3A3"/><rect x="41" y="267" width="1" height="1" fill="#A3A3A3"/><rect x="37" y="283" width="1" height="1" fill="#A3A3A3"/><rect x="39" y="283" width="1" height="1" fill="#A3A3A3"/><rect x="41" y="283" width="1" height="1" fill="#A3A3A3"/><rect x="37" y="299" width="1" height="1" fill="#A3A3A3"/><rect x="39" y="299" width="1" height="1" fill="#A3A3A3"/><rect x="41" y="299" width="1" height="1" fill="#A3A3A3"/><rect x="37" y="315" width="1" height="1" fill="#A3A3A3"/><rect x="39" y="315" width="1" height="1" fill="#A3A3A3"/><rect x="41" y="315" width="1" height="1" fill="#A3A3A3"/><rect x="37" y="331" width="1" height="1" fill="#A3A3A3"/><rect x="39" y="331" width="1" height="1" fill="#A3A3A3"/><rect x="41" y="331" width="1" height="1" fill="#A3A3A3"/><rect x="37" y="347" width="1" height="1" fill="#A3A3A3"/><rect x="39" y="347" width="1" height="1" fill="#A3A3A3"/><rect x="41" y="347" width="1" height="1" fill="#A3A3A3"/><rect x="37" y="363" width="1" height="1" fill="#A3A3A3"/><rect x="39" y="363" width="1" height="1" fill="#A3A3A3"/><rect x="41" y="363" width="1" height="1" fill="#A3A3A3"/><rect x="6.5" y="166.5" width="8" height="8" rx="1" fill="#fff" stroke="#8A877A" stroke-width="1"/><path d="M8 170.5H13" stroke="#444" stroke-width="1"/><path d="M25 164H29L30 165H39V167H25Z" fill="#8FDC8F"/><path d="M24 166.5H40L39.6 175.7H24.4Z" fill="url(#tfg)"/><rect x="25" y="176" width="14" height="1" fill="#ABABAB"/><rect x="45.5" y="180.5" width="16" height="13" fill="#fff" stroke="#000" stroke-width="1"/><path d="M45 190.5H62M51.5 190V194M56.5 190V194" stroke="#000" stroke-width="1"/><rect x="41" y="195" width="146" height="16" fill="url(#hl)"/><rect x="26.5" y="198.5" width="8" height="8" rx="1" fill="#fff" stroke="#8A877A" stroke-width="1"/><path d="M28 202.5H33" stroke="#444" stroke-width="1"/><path d="M30.5 200V205" stroke="#444" stroke-width="1"/><path d="M45 196H52L53 197H59V200H45Z" fill="#5E95E8"/><rect x="46" y="197.5" width="5" height="1.5" fill="#A9C9F2"/><path d="M44 199H60V207.5H44Z" fill="url(#tf)"/><rect x="44" y="199" width="16" height="1" fill="#3F7AD6"/><rect x="45" y="200" width="14" height="1" fill="#C4DBFA"/><rect x="45" y="208" width="14" height="1" fill="#5E5E5E"/><rect x="21" y="211" width="166" height="16" fill="url(#hl)"/><rect x="6.5" y="214.5" width="8" height="8" rx="1" fill="#fff" stroke="#8A877A" stroke-width="1"/><path d="M8 218.5H13" stroke="#444" stroke-width="1"/><circle cx="32" cy="219" r="6.6" fill="#fff" stroke="#111" stroke-width="1.1"/><path d="M27.3 214.3L36.7 223.7M36.7 214.3L27.3 223.7" stroke="#111" stroke-width="1.1"/><path d="M30.5 212.6L32 211.4L33.5 212.6ZM30.5 225.4L32 226.6L33.5 225.4Z" fill="#222" stroke="#222" stroke-width="0.6"/><rect x="41" y="227" width="146" height="16" fill="url(#hl)"/><rect x="26.5" y="230.5" width="8" height="8" rx="1" fill="#fff" stroke="#8A877A" stroke-width="1"/><path d="M28 234.5H33" stroke="#444" stroke-width="1"/><path d="M30.5 232V237" stroke="#444" stroke-width="1"/><path d="M45 228H52L53 229H59V232H45Z" fill="#5E95E8"/><rect x="46" y="229.5" width="5" height="1.5" fill="#A9C9F2"/><path d="M44 231H60V239.5H44Z" fill="url(#tf)"/><rect x="44" y="231" width="16" height="1" fill="#3F7AD6"/><rect x="45" y="232" width="14" height="1" fill="#C4DBFA"/><rect x="45" y="240" width="14" height="1" fill="#5E5E5E"/><rect x="41" y="243" width="146" height="16" fill="url(#hl)"/><rect x="26.5" y="246.5" width="8" height="8" rx="1" fill="#fff" stroke="#8A877A" stroke-width="1"/><path d="M28 250.5H33" stroke="#444" stroke-width="1"/><path d="M30.5 248V253" stroke="#444" stroke-width="1"/><path d="M45 244H52L53 245H59V248H45Z" fill="#5E95E8"/><rect x="46" y="245.5" width="5" height="1.5" fill="#A9C9F2"/><path d="M44 247H60V255.5H44Z" fill="url(#tf)"/><rect x="44" y="247" width="16" height="1" fill="#3F7AD6"/><rect x="45" y="248" width="14" height="1" fill="#C4DBFA"/><rect x="45" y="256" width="14" height="1" fill="#5E5E5E"/><rect x="41" y="259" width="146" height="16" fill="url(#hl)"/><rect x="26.5" y="262.5" width="8" height="8" rx="1" fill="#fff" stroke="#8A877A" stroke-width="1"/><path d="M28 266.5H33" stroke="#444" stroke-width="1"/><path d="M30.5 264V269" stroke="#444" stroke-width="1"/><path d="M45 260H52L53 261H59V264H45Z" fill="#5E95E8"/><rect x="46" y="261.5" width="5" height="1.5" fill="#A9C9F2"/><path d="M44 263H60V271.5H44Z" fill="url(#tf)"/><rect x="44" y="263" width="16" height="1" fill="#3F7AD6"/><rect x="45" y="264" width="14" height="1" fill="#C4DBFA"/><rect x="45" y="272" width="14" height="1" fill="#5E5E5E"/><rect x="41" y="275" width="146" height="16" fill="url(#hl)"/><rect x="26.5" y="278.5" width="8" height="8" rx="1" fill="#fff" stroke="#8A877A" stroke-width="1"/><path d="M28 282.5H33" stroke="#444" stroke-width="1"/><path d="M30.5 280V285" stroke="#444" stroke-width="1"/><path d="M45 276H52L53 277H59V280H45Z" fill="#5E95E8"/><rect x="46" y="277.5" width="5" height="1.5" fill="#A9C9F2"/><path d="M44 279H60V287.5H44Z" fill="url(#tf)"/><rect x="44" y="279" width="16" height="1" fill="#3F7AD6"/><rect x="45" y="280" width="14" height="1" fill="#C4DBFA"/><rect x="45" y="288" width="14" height="1" fill="#5E5E5E"/><rect x="41" y="291" width="146" height="16" fill="url(#hl)"/><rect x="26.5" y="294.5" width="8" height="8" rx="1" fill="#fff" stroke="#8A877A" stroke-width="1"/><path d="M28 298.5H33" stroke="#444" stroke-width="1"/><path d="M30.5 296V301" stroke="#444" stroke-width="1"/><path d="M45 292H52L53 293H59V296H45Z" fill="#5E95E8"/><rect x="46" y="293.5" width="5" height="1.5" fill="#A9C9F2"/><path d="M44 295H60V303.5H44Z" fill="url(#tf)"/><rect x="44" y="295" width="16" height="1" fill="#3F7AD6"/><rect x="45" y="296" width="14" height="1" fill="#C4DBFA"/><rect x="45" y="304" width="14" height="1" fill="#5E5E5E"/><rect x="41" y="307" width="146" height="16" fill="url(#hl)"/><rect x="26.5" y="310.5" width="8" height="8" rx="1" fill="#fff" stroke="#8A877A" stroke-width="1"/><path d="M28 314.5H33" stroke="#444" stroke-width="1"/><path d="M30.5 312V317" stroke="#444" stroke-width="1"/><path d="M45 308H52L53 309H59V312H45Z" fill="#5E95E8"/><rect x="46" y="309.5" width="5" height="1.5" fill="#A9C9F2"/><path d="M44 311H60V319.5H44Z" fill="url(#tf)"/><rect x="44" y="311" width="16" height="1" fill="#3F7AD6"/><rect x="45" y="312" width="14" height="1" fill="#C4DBFA"/><rect x="45" y="320" width="14" height="1" fill="#5E5E5E"/><rect x="41" y="323" width="146" height="16" fill="url(#hl)"/><rect x="26.5" y="326.5" width="8" height="8" rx="1" fill="#fff" stroke="#8A877A" stroke-width="1"/><path d="M28 330.5H33" stroke="#444" stroke-width="1"/><path d="M30.5 328V333" stroke="#444" stroke-width="1"/><path d="M45 324H52L53 325H59V328H45Z" fill="#5E95E8"/><rect x="46" y="325.5" width="5" height="1.5" fill="#A9C9F2"/><path d="M44 327H60V335.5H44Z" fill="url(#tf)"/><rect x="44" y="327" width="16" height="1" fill="#3F7AD6"/><rect x="45" y="328" width="14" height="1" fill="#C4DBFA"/><rect x="45" y="336" width="14" height="1" fill="#5E5E5E"/><rect x="41" y="339" width="146" height="16" fill="url(#hl)"/><rect x="26.5" y="342.5" width="8" height="8" rx="1" fill="#fff" stroke="#8A877A" stroke-width="1"/><path d="M28 346.5H33" stroke="#444" stroke-width="1"/><path d="M30.5 344V349" stroke="#444" stroke-width="1"/><path d="M45 340H52L53 341H59V344H45Z" fill="#5E95E8"/><rect x="46" y="341.5" width="5" height="1.5" fill="#A9C9F2"/><path d="M44 343H60V351.5H44Z" fill="url(#tf)"/><rect x="44" y="343" width="16" height="1" fill="#3F7AD6"/><rect x="45" y="344" width="14" height="1" fill="#C4DBFA"/><rect x="45" y="352" width="14" height="1" fill="#5E5E5E"/><rect x="41" y="355" width="146" height="16" fill="url(#hl)"/><rect x="26.5" y="358.5" width="8" height="8" rx="1" fill="#fff" stroke="#8A877A" stroke-width="1"/><path d="M28 362.5H33" stroke="#444" stroke-width="1"/><path d="M30.5 360V365" stroke="#444" stroke-width="1"/><path d="M45 356H52L53 357H59V360H45Z" fill="#5E95E8"/><rect x="46" y="357.5" width="5" height="1.5" fill="#A9C9F2"/><path d="M44 359H60V367.5H44Z" fill="url(#tf)"/><rect x="44" y="359" width="16" height="1" fill="#3F7AD6"/><rect x="45" y="360" width="14" height="1" fill="#C4DBFA"/><rect x="45" y="368" width="14" height="1" fill="#5E5E5E"/><rect x="21" y="371" width="166" height="16" fill="url(#hl)"/><path d="M24 379L32 372L40 379" fill="none" stroke="#444" stroke-width="1.6"/><path d="M26.5 378L32 373.5L37.5 378V385.5H26.5Z" fill="#fff" stroke="#555" stroke-width="1"/><rect x="30" y="380" width="4" height="6" fill="#D05A00"/><rect x="36" y="372" width="2" height="3" fill="#444"/></svg>
<div class="t" style="left:45px;top:165px">Projet sans titre</div>
<div class="t" style="left:68px;top:181px">Schéma sans titre</div>
<div class="t" style="left:65px;top:197px">Collection projet</div>
<div class="t" style="left:45px;top:213px">Collection QET</div>
<div class="t" style="left:65px;top:229px">Automatisme</div>
<div class="t" style="left:65px;top:245px">Capteurs</div>
<div class="t" style="left:65px;top:261px">Contacts</div>
<div class="t" style="left:65px;top:277px">Convertisseurs</div>
<div class="t" style="left:65px;top:293px">Haute tension</div>
<div class="t" style="left:65px;top:309px">Protections</div>
<div class="t" style="left:65px;top:325px">Récepteurs</div>
<div class="t" style="left:65px;top:341px">Semi-conducteurs</div>
<div class="t" style="left:65px;top:357px">Sources</div>
<div class="t" style="left:45px;top:373px">Collection utilisateur</div>
<div class="a" style="left:195px;top:109px;width:350px;height:454px;border:1px solid #ACA996;border-left-color:#C2BFAE;border-right-color:#C2BFAE;border-bottom-color:#C2BFAE;border-radius:0 0 3px 3px;background:#E2DDCB"></div>
<!-- center tabs -->
<div class="a" style="left:368px;top:63px;width:177px;height:23px;background:#fff;border-bottom:1px solid #B5B2A3"></div>
<div class="a" style="left:195px;top:63px;width:174px;height:24px;background:#ECE9D8;border:1px solid #B5B2A3;border-left-color:#C8C7C2;border-bottom:none;border-radius:3px 3px 0 0"></div>
<div class="t" style="left:255px;top:69px">Projet sans titre</div>
<div class="a" style="left:195px;top:87px;width:126px;height:23px;background:#ECE9D8;border:1px solid #ACA996;border-bottom:none;border-radius:3px 3px 0 0"></div>
<div class="a" style="left:321px;top:109px;width:224px;height:1px;background:#ACA996"></div>
<div class="t" style="left:227px;top:94px;letter-spacing:-0.2px">Schéma sans titre</div>
<svg class="a" style="left:0;top:0" width="710" height="120">
<defs><linearGradient id="tfg2" x1="0" y1="0" x2="0" y2="1"><stop offset="0" stop-color="#34C634"/><stop offset="0.75" stop-color="#6ED86E"/><stop offset="0.8" stop-color="#9FE69F"/><stop offset="1" stop-color="#A8EAA8"/></linearGradient></defs>
<path d="M202 67H206L207 68H216V70H202Z" fill="#8FDC8F"/><path d="M201 69.5H217L216.6 78.7H201.4Z" fill="url(#tfg2)"/><rect x="202" y="79" width="14" height="1" fill="#ABABAB"/>
<rect x="202.5" y="93.5" width="13" height="10" fill="#fff" stroke="#000"/>
<path d="M202 101.5H216M206.5 101V104M211.5 101V104" stroke="#000"/>
</svg>
<!-- canvas frame -->

<div class="a" style="left:197px;top:111px;width:346px;height:450px;border:1px solid #5585D2;border-right-color:#5080CC;border-bottom-color:#5080CC;box-shadow:inset 1px 1px 0 #2A5AB0,inset -1px -1px 0 #7098D0;background:#fff;border-radius:3px"></div>
<svg class="a" style="left:0;top:0" width="710" height="581"><path d="M199 113h1v1h-1zM199 123h1v1h-1zM199 133h1v1h-1zM199 143h1v1h-1zM199 153h1v1h-1zM199 163h1v1h-1zM199 173h1v1h-1zM199 183h1v1h-1zM199 193h1v1h-1zM199 203h1v1h-1zM199 213h1v1h-1zM199 223h1v1h-1zM199 233h1v1h-1zM199 243h1v1h-1zM199 253h1v1h-1zM199 263h1v1h-1zM199 273h1v1h-1zM199 283h1v1h-1zM199 293h1v1h-1zM199 303h1v1h-1zM199 313h1v1h-1zM199 323h1v1h-1zM199 333h1v1h-1zM199 343h1v1h-1zM199 353h1v1h-1zM199 363h1v1h-1zM199 373h1v1h-1zM199 383h1v1h-1zM199 393h1v1h-1zM199 403h1v1h-1zM199 413h1v1h-1zM199 423h1v1h-1zM199 433h1v1h-1zM199 443h1v1h-1zM199 453h1v1h-1zM199 463h1v1h-1zM199 473h1v1h-1zM199 483h1v1h-1zM199 493h1v1h-1zM199 503h1v1h-1zM199 513h1v1h-1zM199 523h1v1h-1zM199 533h1v1h-1zM199 543h1v1h-1zM209 113h1v1h-1zM209 123h1v1h-1zM209 133h1v1h-1zM209 143h1v1h-1zM209 153h1v1h-1zM209 163h1v1h-1zM209 173h1v1h-1zM209 183h1v1h-1zM209 193h1v1h-1zM209 203h1v1h-1zM209 213h1v1h-1zM209 223h1v1h-1zM209 233h1v1h-1zM209 243h1v1h-1zM209 253h1v1h-1zM209 263h1v1h-1zM209 273h1v1h-1zM209 283h1v1h-1zM209 293h1v1h-1zM209 303h1v1h-1zM209 313h1v1h-1zM209 323h1v1h-1zM209 333h1v1h-1zM209 343h1v1h-1zM209 353h1v1h-1zM209 363h1v1h-1zM209 373h1v1h-1zM209 383h1v1h-1zM209 393h1v1h-1zM209 403h1v1h-1zM209 413h1v1h-1zM209 423h1v1h-1zM209 433h1v1h-1zM209 443h1v1h-1zM209 453h1v1h-1zM209 463h1v1h-1zM209 473h1v1h-1zM209 483h1v1h-1zM209 493h1v1h-1zM209 503h1v1h-1zM209 513h1v1h-1zM209 523h1v1h-1zM209 533h1v1h-1zM209 543h1v1h-1zM219 113h1v1h-1zM219 123h1v1h-1zM219 133h1v1h-1zM219 143h1v1h-1zM219 153h1v1h-1zM219 163h1v1h-1zM219 173h1v1h-1zM219 183h1v1h-1zM219 193h1v1h-1zM219 203h1v1h-1zM219 213h1v1h-1zM219 223h1v1h-1zM219 233h1v1h-1zM219 243h1v1h-1zM219 253h1v1h-1zM219 263h1v1h-1zM219 273h1v1h-1zM219 283h1v1h-1zM219 293h1v1h-1zM219 303h1v1h-1zM219 313h1v1h-1zM219 323h1v1h-1zM219 333h1v1h-1zM219 343h1v1h-1zM219 353h1v1h-1zM219 363h1v1h-1zM219 373h1v1h-1zM219 383h1v1h-1zM219 393h1v1h-1zM219 403h1v1h-1zM219 413h1v1h-1zM219 423h1v1h-1zM219 433h1v1h-1zM219 443h1v1h-1zM219 453h1v1h-1zM219 463h1v1h-1zM219 473h1v1h-1zM219 483h1v1h-1zM219 493h1v1h-1zM219 503h1v1h-1zM219 513h1v1h-1zM219 523h1v1h-1zM219 533h1v1h-1zM219 543h1v1h-1zM229 113h1v1h-1zM229 123h1v1h-1zM229 133h1v1h-1zM229 143h1v1h-1zM229 153h1v1h-1zM229 163h1v1h-1zM229 173h1v1h-1zM229 183h1v1h-1zM229 193h1v1h-1zM229 203h1v1h-1zM229 213h1v1h-1zM229 223h1v1h-1zM229 233h1v1h-1zM229 243h1v1h-1zM229 253h1v1h-1zM229 263h1v1h-1zM229 273h1v1h-1zM229 283h1v1h-1zM229 293h1v1h-1zM229 303h1v1h-1zM229 313h1v1h-1zM229 323h1v1h-1zM229 333h1v1h-1zM229 343h1v1h-1zM229 353h1v1h-1zM229 363h1v1h-1zM229 373h1v1h-1zM229 383h1v1h-1zM229 393h1v1h-1zM229 403h1v1h-1zM229 413h1v1h-1zM229 423h1v1h-1zM229 433h1v1h-1zM229 443h1v1h-1zM229 453h1v1h-1zM229 463h1v1h-1zM229 473h1v1h-1zM229 483h1v1h-1zM229 493h1v1h-1zM229 503h1v1h-1zM229 513h1v1h-1zM229 523h1v1h-1zM229 533h1v1h-1zM229 543h1v1h-1zM239 113h1v1h-1zM239 123h1v1h-1zM239 133h1v1h-1zM239 143h1v1h-1zM239 153h1v1h-1zM239 163h1v1h-1zM239 173h1v1h-1zM239 183h1v1h-1zM239 193h1v1h-1zM239 203h1v1h-1zM239 213h1v1h-1zM239 223h1v1h-1zM239 233h1v1h-1zM239 243h1v1h-1zM239 253h1v1h-1zM239 263h1v1h-1zM239 273h1v1h-1zM239 283h1v1h-1zM239 293h1v1h-1zM239 303h1v1h-1zM239 313h1v1h-1zM239 323h1v1h-1zM239 333h1v1h-1zM239 343h1v1h-1zM239 353h1v1h-1zM239 363h1v1h-1zM239 373h1v1h-1zM239 383h1v1h-1zM239 393h1v1h-1zM239 403h1v1h-1zM239 413h1v1h-1zM239 423h1v1h-1zM239 433h1v1h-1zM239 443h1v1h-1zM239 453h1v1h-1zM239 463h1v1h-1zM239 473h1v1h-1zM239 483h1v1h-1zM239 493h1v1h-1zM239 503h1v1h-1zM239 513h1v1h-1zM239 523h1v1h-1zM239 533h1v1h-1zM239 543h1v1h-1zM249 113h1v1h-1zM249 123h1v1h-1zM249 133h1v1h-1zM249 143h1v1h-1zM249 153h1v1h-1zM249 163h1v1h-1zM249 173h1v1h-1zM249 183h1v1h-1zM249 193h1v1h-1zM249 203h1v1h-1zM249 213h1v1h-1zM249 223h1v1h-1zM249 233h1v1h-1zM249 243h1v1h-1zM249 253h1v1h-1zM249 263h1v1h-1zM249 273h1v1h-1zM249 283h1v1h-1zM249 293h1v1h-1zM249 303h1v1h-1zM249 313h1v1h-1zM249 323h1v1h-1zM249 333h1v1h-1zM249 343h1v1h-1zM249 353h1v1h-1zM249 363h1v1h-1zM249 373h1v1h-1zM249 383h1v1h-1zM249 393h1v1h-1zM249 403h1v1h-1zM249 413h1v1h-1zM249 423h1v1h-1zM249 433h1v1h-1zM249 443h1v1h-1zM249 453h1v1h-1zM249 463h1v1h-1zM249 473h1v1h-1zM249 483h1v1h-1zM249 493h1v1h-1zM249 503h1v1h-1zM249 513h1v1h-1zM249 523h1v1h-1zM249 533h1v1h-1zM249 543h1v1h-1zM259 113h1v1h-1zM259 123h1v1h-1zM259 133h1v1h-1zM259 143h1v1h-1zM259 153h1v1h-1zM259 163h1v1h-1zM259 173h1v1h-1zM259 183h1v1h-1zM259 193h1v1h-1zM259 203h1v1h-1zM259 213h1v1h-1zM259 223h1v1h-1zM259 233h1v1h-1zM259 243h1v1h-1zM259 253h1v1h-1zM259 263h1v1h-1zM259 273h1v1h-1zM259 283h1v1h-1zM259 293h1v1h-1zM259 303h1v1h-1zM259 313h1v1h-1zM259 323h1v1h-1zM259 333h1v1h-1zM259 343h1v1h-1zM259 353h1v1h-1zM259 363h1v1h-1zM259 373h1v1h-1zM259 383h1v1h-1zM259 393h1v1h-1zM259 403h1v1h-1zM259 413h1v1h-1zM259 423h1v1h-1zM259 433h1v1h-1zM259 443h1v1h-1zM259 453h1v1h-1zM259 463h1v1h-1zM259 473h1v1h-1zM259 483h1v1h-1zM259 493h1v1h-1zM259 503h1v1h-1zM259 513h1v1h-1zM259 523h1v1h-1zM259 533h1v1h-1zM259 543h1v1h-1zM269 113h1v1h-1zM269 123h1v1h-1zM269 133h1v1h-1zM269 143h1v1h-1zM269 153h1v1h-1zM269 163h1v1h-1zM269 173h1v1h-1zM269 183h1v1h-1zM269 193h1v1h-1zM269 203h1v1h-1zM269 213h1v1h-1zM269 223h1v1h-1zM269 233h1v1h-1zM269 243h1v1h-1zM269 253h1v1h-1zM269 263h1v1h-1zM269 273h1v1h-1zM269 283h1v1h-1zM269 293h1v1h-1zM269 303h1v1h-1zM269 313h1v1h-1zM269 323h1v1h-1zM269 333h1v1h-1zM269 343h1v1h-1zM269 353h1v1h-1zM269 363h1v1h-1zM269 373h1v1h-1zM269 383h1v1h-1zM269 393h1v1h-1zM269 403h1v1h-1zM269 413h1v1h-1zM269 423h1v1h-1zM269 433h1v1h-1zM269 443h1v1h-1zM269 453h1v1h-1zM269 463h1v1h-1zM269 473h1v1h-1zM269 483h1v1h-1zM269 493h1v1h-1zM269 503h1v1h-1zM269 513h1v1h-1zM269 523h1v1h-1zM269 533h1v1h-1zM269 543h1v1h-1zM279 113h1v1h-1zM279 123h1v1h-1zM279 133h1v1h-1zM279 143h1v1h-1zM279 153h1v1h-1zM279 163h1v1h-1zM279 173h1v1h-1zM279 183h1v1h-1zM279 193h1v1h-1zM279 203h1v1h-1zM279 213h1v1h-1zM279 223h1v1h-1zM279 233h1v1h-1zM279 243h1v1h-1zM279 253h1v1h-1zM279 263h1v1h-1zM279 273h1v1h-1zM279 283h1v1h-1zM279 293h1v1h-1zM279 303h1v1h-1zM279 313h1v1h-1zM279 323h1v1h-1zM279 333h1v1h-1zM279 343h1v1h-1zM279 353h1v1h-1zM279 363h1v1h-1zM279 373h1v1h-1zM279 383h1v1h-1zM279 393h1v1h-1zM279 403h1v1h-1zM279 413h1v1h-1zM279 423h1v1h-1zM279 433h1v1h-1zM279 443h1v1h-1zM279 453h1v1h-1zM279 463h1v1h-1zM279 473h1v1h-1zM279 483h1v1h-1zM279 493h1v1h-1zM279 503h1v1h-1zM279 513h1v1h-1zM279 523h1v1h-1zM279 533h1v1h-1zM279 543h1v1h-1zM289 113h1v1h-1zM289 123h1v1h-1zM289 133h1v1h-1zM289 143h1v1h-1zM289 153h1v1h-1zM289 163h1v1h-1zM289 173h1v1h-1zM289 183h1v1h-1zM289 193h1v1h-1zM289 203h1v1h-1zM289 213h1v1h-1zM289 223h1v1h-1zM289 233h1v1h-1zM289 243h1v1h-1zM289 253h1v1h-1zM289 263h1v1h-1zM289 273h1v1h-1zM289 283h1v1h-1zM289 293h1v1h-1zM289 303h1v1h-1zM289 313h1v1h-1zM289 323h1v1h-1zM289 333h1v1h-1zM289 343h1v1h-1zM289 353h1v1h-1zM289 363h1v1h-1zM289 373h1v1h-1zM289 383h1v1h-1zM289 393h1v1h-1zM289 403h1v1h-1zM289 413h1v1h-1zM289 423h1v1h-1zM289 433h1v1h-1zM289 443h1v1h-1zM289 453h1v1h-1zM289 463h1v1h-1zM289 473h1v1h-1zM289 483h1v1h-1zM289 493h1v1h-1zM289 503h1v1h-1zM289 513h1v1h-1zM289 523h1v1h-1zM289 533h1v1h-1zM289 543h1v1h-1zM299 113h1v1h-1zM299 123h1v1h-1zM299 133h1v1h-1zM299 143h1v1h-1zM299 153h1v1h-1zM299 163h1v1h-1zM299 173h1v1h-1zM299 183h1v1h-1zM299 193h1v1h-1zM299 203h1v1h-1zM299 213h1v1h-1zM299 223h1v1h-1zM299 233h1v1h-1zM299 243h1v1h-1zM299 253h1v1h-1zM299 263h1v1h-1zM299 273h1v1h-1zM299 283h1v1h-1zM299 293h1v1h-1zM299 303h1v1h-1zM299 313h1v1h-1zM299 323h1v1h-1zM299 333h1v1h-1zM299 343h1v1h-1zM299 353h1v1h-1zM299 363h1v1h-1zM299 373h1v1h-1zM299 383h1v1h-1zM299 393h1v1h-1zM299 403h1v1h-1zM299 413h1v1h-1zM299 423h1v1h-1zM299 433h1v1h-1zM299 443h1v1h-1zM299 453h1v1h-1zM299 463h1v1h-1zM299 473h1v1h-1zM299 483h1v1h-1zM299 493h1v1h-1zM299 503h1v1h-1zM299 513h1v1h-1zM299 523h1v1h-1zM299 533h1v1h-1zM299 543h1v1h-1zM309 113h1v1h-1zM309 123h1v1h-1zM309 133h1v1h-1zM309 143h1v1h-1zM309 153h1v1h-1zM309 163h1v1h-1zM309 173h1v1h-1zM309 183h1v1h-1zM309 193h1v1h-1zM309 203h1v1h-1zM309 213h1v1h-1zM309 223h1v1h-1zM309 233h1v1h-1zM309 243h1v1h-1zM309 253h1v1h-1zM309 263h1v1h-1zM309 273h1v1h-1zM309 283h1v1h-1zM309 293h1v1h-1zM309 303h1v1h-1zM309 313h1v1h-1zM309 323h1v1h-1zM309 333h1v1h-1zM309 343h1v1h-1zM309 353h1v1h-1zM309 363h1v1h-1zM309 373h1v1h-1zM309 383h1v1h-1zM309 393h1v1h-1zM309 403h1v1h-1zM309 413h1v1h-1zM309 423h1v1h-1zM309 433h1v1h-1zM309 443h1v1h-1zM309 453h1v1h-1zM309 463h1v1h-1zM309 473h1v1h-1zM309 483h1v1h-1zM309 493h1v1h-1zM309 503h1v1h-1zM309 513h1v1h-1zM309 523h1v1h-1zM309 533h1v1h-1zM309 543h1v1h-1zM319 113h1v1h-1zM319 123h1v1h-1zM319 133h1v1h-1zM319 143h1v1h-1zM319 153h1v1h-1zM319 163h1v1h-1zM319 173h1v1h-1zM319 183h1v1h-1zM319 193h1v1h-1zM319 203h1v1h-1zM319 213h1v1h-1zM319 223h1v1h-1zM319 233h1v1h-1zM319 243h1v1h-1zM319 253h1v1h-1zM319 263h1v1h-1zM319 273h1v1h-1zM319 283h1v1h-1zM319 293h1v1h-1zM319 303h1v1h-1zM319 313h1v1h-1zM319 323h1v1h-1zM319 333h1v1h-1zM319 343h1v1h-1zM319 353h1v1h-1zM319 363h1v1h-1zM319 373h1v1h-1zM319 383h1v1h-1zM319 393h1v1h-1zM319 403h1v1h-1zM319 413h1v1h-1zM319 423h1v1h-1zM319 433h1v1h-1zM319 443h1v1h-1zM319 453h1v1h-1zM319 463h1v1h-1zM319 473h1v1h-1zM319 483h1v1h-1zM319 493h1v1h-1zM319 503h1v1h-1zM319 513h1v1h-1zM319 523h1v1h-1zM319 533h1v1h-1zM319 543h1v1h-1zM329 113h1v1h-1zM329 123h1v1h-1zM329 133h1v1h-1zM329 143h1v1h-1zM329 153h1v1h-1zM329 163h1v1h-1zM329 173h1v1h-1zM329 183h1v1h-1zM329 193h1v1h-1zM329 203h1v1h-1zM329 213h1v1h-1zM329 223h1v1h-1zM329 233h1v1h-1zM329 243h1v1h-1zM329 253h1v1h-1zM329 263h1v1h-1zM329 273h1v1h-1zM329 283h1v1h-1zM329 293h1v1h-1zM329 303h1v1h-1zM329 313h1v1h-1zM329 323h1v1h-1zM329 333h1v1h-1zM329 343h1v1h-1zM329 353h1v1h-1zM329 363h1v1h-1zM329 373h1v1h-1zM329 383h1v1h-1zM329 393h1v1h-1zM329 403h1v1h-1zM329 413h1v1h-1zM329 423h1v1h-1zM329 433h1v1h-1zM329 443h1v1h-1zM329 453h1v1h-1zM329 463h1v1h-1zM329 473h1v1h-1zM329 483h1v1h-1zM329 493h1v1h-1zM329 503h1v1h-1zM329 513h1v1h-1zM329 523h1v1h-1zM329 533h1v1h-1zM329 543h1v1h-1zM339 113h1v1h-1zM339 123h1v1h-1zM339 133h1v1h-1zM339 143h1v1h-1zM339 153h1v1h-1zM339 163h1v1h-1zM339 173h1v1h-1zM339 183h1v1h-1zM339 193h1v1h-1zM339 203h1v1h-1zM339 213h1v1h-1zM339 223h1v1h-1zM339 233h1v1h-1zM339 243h1v1h-1zM339 253h1v1h-1zM339 263h1v1h-1zM339 273h1v1h-1zM339 283h1v1h-1zM339 293h1v1h-1zM339 303h1v1h-1zM339 313h1v1h-1zM339 323h1v1h-1zM339 333h1v1h-1zM339 343h1v1h-1zM339 353h1v1h-1zM339 363h1v1h-1zM339 373h1v1h-1zM339 383h1v1h-1zM339 393h1v1h-1zM339 403h1v1h-1zM339 413h1v1h-1zM339 423h1v1h-1zM339 433h1v1h-1zM339 443h1v1h-1zM339 453h1v1h-1zM339 463h1v1h-1zM339 473h1v1h-1zM339 483h1v1h-1zM339 493h1v1h-1zM339 503h1v1h-1zM339 513h1v1h-1zM339 523h1v1h-1zM339 533h1v1h-1zM339 543h1v1h-1zM349 113h1v1h-1zM349 123h1v1h-1zM349 133h1v1h-1zM349 143h1v1h-1zM349 153h1v1h-1zM349 163h1v1h-1zM349 173h1v1h-1zM349 183h1v1h-1zM349 193h1v1h-1zM349 203h1v1h-1zM349 213h1v1h-1zM349 223h1v1h-1zM349 233h1v1h-1zM349 243h1v1h-1zM349 253h1v1h-1zM349 263h1v1h-1zM349 273h1v1h-1zM349 283h1v1h-1zM349 293h1v1h-1zM349 303h1v1h-1zM349 313h1v1h-1zM349 323h1v1h-1zM349 333h1v1h-1zM349 343h1v1h-1zM349 353h1v1h-1zM349 363h1v1h-1zM349 373h1v1h-1zM349 383h1v1h-1zM349 393h1v1h-1zM349 403h1v1h-1zM349 413h1v1h-1zM349 423h1v1h-1zM349 433h1v1h-1zM349 443h1v1h-1zM349 453h1v1h-1zM349 463h1v1h-1zM349 473h1v1h-1zM349 483h1v1h-1zM349 493h1v1h-1zM349 503h1v1h-1zM349 513h1v1h-1zM349 523h1v1h-1zM349 533h1v1h-1zM349 543h1v1h-1zM359 113h1v1h-1zM359 123h1v1h-1zM359 133h1v1h-1zM359 143h1v1h-1zM359 153h1v1h-1zM359 163h1v1h-1zM359 173h1v1h-1zM359 183h1v1h-1zM359 193h1v1h-1zM359 203h1v1h-1zM359 213h1v1h-1zM359 223h1v1h-1zM359 233h1v1h-1zM359 243h1v1h-1zM359 253h1v1h-1zM359 263h1v1h-1zM359 273h1v1h-1zM359 283h1v1h-1zM359 293h1v1h-1zM359 303h1v1h-1zM359 313h1v1h-1zM359 323h1v1h-1zM359 333h1v1h-1zM359 343h1v1h-1zM359 353h1v1h-1zM359 363h1v1h-1zM359 373h1v1h-1zM359 383h1v1h-1zM359 393h1v1h-1zM359 403h1v1h-1zM359 413h1v1h-1zM359 423h1v1h-1zM359 433h1v1h-1zM359 443h1v1h-1zM359 453h1v1h-1zM359 463h1v1h-1zM359 473h1v1h-1zM359 483h1v1h-1zM359 493h1v1h-1zM359 503h1v1h-1zM359 513h1v1h-1zM359 523h1v1h-1zM359 533h1v1h-1zM359 543h1v1h-1zM369 113h1v1h-1zM369 123h1v1h-1zM369 133h1v1h-1zM369 143h1v1h-1zM369 153h1v1h-1zM369 163h1v1h-1zM369 173h1v1h-1zM369 183h1v1h-1zM369 193h1v1h-1zM369 203h1v1h-1zM369 213h1v1h-1zM369 223h1v1h-1zM369 233h1v1h-1zM369 243h1v1h-1zM369 253h1v1h-1zM369 263h1v1h-1zM369 273h1v1h-1zM369 283h1v1h-1zM369 293h1v1h-1zM369 303h1v1h-1zM369 313h1v1h-1zM369 323h1v1h-1zM369 333h1v1h-1zM369 343h1v1h-1zM369 353h1v1h-1zM369 363h1v1h-1zM369 373h1v1h-1zM369 383h1v1h-1zM369 393h1v1h-1zM369 403h1v1h-1zM369 413h1v1h-1zM369 423h1v1h-1zM369 433h1v1h-1zM369 443h1v1h-1zM369 453h1v1h-1zM369 463h1v1h-1zM369 473h1v1h-1zM369 483h1v1h-1zM369 493h1v1h-1zM369 503h1v1h-1zM369 513h1v1h-1zM369 523h1v1h-1zM369 533h1v1h-1zM369 543h1v1h-1zM379 113h1v1h-1zM379 123h1v1h-1zM379 133h1v1h-1zM379 143h1v1h-1zM379 153h1v1h-1zM379 163h1v1h-1zM379 173h1v1h-1zM379 183h1v1h-1zM379 193h1v1h-1zM379 203h1v1h-1zM379 213h1v1h-1zM379 223h1v1h-1zM379 233h1v1h-1zM379 243h1v1h-1zM379 253h1v1h-1zM379 263h1v1h-1zM379 273h1v1h-1zM379 283h1v1h-1zM379 293h1v1h-1zM379 303h1v1h-1zM379 313h1v1h-1zM379 323h1v1h-1zM379 333h1v1h-1zM379 343h1v1h-1zM379 353h1v1h-1zM379 363h1v1h-1zM379 373h1v1h-1zM379 383h1v1h-1zM379 393h1v1h-1zM379 403h1v1h-1zM379 413h1v1h-1zM379 423h1v1h-1zM379 433h1v1h-1zM379 443h1v1h-1zM379 453h1v1h-1zM379 463h1v1h-1zM379 473h1v1h-1zM379 483h1v1h-1zM379 493h1v1h-1zM379 503h1v1h-1zM379 513h1v1h-1zM379 523h1v1h-1zM379 533h1v1h-1zM379 543h1v1h-1zM389 113h1v1h-1zM389 123h1v1h-1zM389 133h1v1h-1zM389 143h1v1h-1zM389 153h1v1h-1zM389 163h1v1h-1zM389 173h1v1h-1zM389 183h1v1h-1zM389 193h1v1h-1zM389 203h1v1h-1zM389 213h1v1h-1zM389 223h1v1h-1zM389 233h1v1h-1zM389 243h1v1h-1zM389 253h1v1h-1zM389 263h1v1h-1zM389 273h1v1h-1zM389 283h1v1h-1zM389 293h1v1h-1zM389 303h1v1h-1zM389 313h1v1h-1zM389 323h1v1h-1zM389 333h1v1h-1zM389 343h1v1h-1zM389 353h1v1h-1zM389 363h1v1h-1zM389 373h1v1h-1zM389 383h1v1h-1zM389 393h1v1h-1zM389 403h1v1h-1zM389 413h1v1h-1zM389 423h1v1h-1zM389 433h1v1h-1zM389 443h1v1h-1zM389 453h1v1h-1zM389 463h1v1h-1zM389 473h1v1h-1zM389 483h1v1h-1zM389 493h1v1h-1zM389 503h1v1h-1zM389 513h1v1h-1zM389 523h1v1h-1zM389 533h1v1h-1zM389 543h1v1h-1zM399 113h1v1h-1zM399 123h1v1h-1zM399 133h1v1h-1zM399 143h1v1h-1zM399 153h1v1h-1zM399 163h1v1h-1zM399 173h1v1h-1zM399 183h1v1h-1zM399 193h1v1h-1zM399 203h1v1h-1zM399 213h1v1h-1zM399 223h1v1h-1zM399 233h1v1h-1zM399 243h1v1h-1zM399 253h1v1h-1zM399 263h1v1h-1zM399 273h1v1h-1zM399 283h1v1h-1zM399 293h1v1h-1zM399 303h1v1h-1zM399 313h1v1h-1zM399 323h1v1h-1zM399 333h1v1h-1zM399 343h1v1h-1zM399 353h1v1h-1zM399 363h1v1h-1zM399 373h1v1h-1zM399 383h1v1h-1zM399 393h1v1h-1zM399 403h1v1h-1zM399 413h1v1h-1zM399 423h1v1h-1zM399 433h1v1h-1zM399 443h1v1h-1zM399 453h1v1h-1zM399 463h1v1h-1zM399 473h1v1h-1zM399 483h1v1h-1zM399 493h1v1h-1zM399 503h1v1h-1zM399 513h1v1h-1zM399 523h1v1h-1zM399 533h1v1h-1zM399 543h1v1h-1zM409 113h1v1h-1zM409 123h1v1h-1zM409 133h1v1h-1zM409 143h1v1h-1zM409 153h1v1h-1zM409 163h1v1h-1zM409 173h1v1h-1zM409 183h1v1h-1zM409 193h1v1h-1zM409 203h1v1h-1zM409 213h1v1h-1zM409 223h1v1h-1zM409 233h1v1h-1zM409 243h1v1h-1zM409 253h1v1h-1zM409 263h1v1h-1zM409 273h1v1h-1zM409 283h1v1h-1zM409 293h1v1h-1zM409 303h1v1h-1zM409 313h1v1h-1zM409 323h1v1h-1zM409 333h1v1h-1zM409 343h1v1h-1zM409 353h1v1h-1zM409 363h1v1h-1zM409 373h1v1h-1zM409 383h1v1h-1zM409 393h1v1h-1zM409 403h1v1h-1zM409 413h1v1h-1zM409 423h1v1h-1zM409 433h1v1h-1zM409 443h1v1h-1zM409 453h1v1h-1zM409 463h1v1h-1zM409 473h1v1h-1zM409 483h1v1h-1zM409 493h1v1h-1zM409 503h1v1h-1zM409 513h1v1h-1zM409 523h1v1h-1zM409 533h1v1h-1zM409 543h1v1h-1zM419 113h1v1h-1zM419 123h1v1h-1zM419 133h1v1h-1zM419 143h1v1h-1zM419 153h1v1h-1zM419 163h1v1h-1zM419 173h1v1h-1zM419 183h1v1h-1zM419 193h1v1h-1zM419 203h1v1h-1zM419 213h1v1h-1zM419 223h1v1h-1zM419 233h1v1h-1zM419 243h1v1h-1zM419 253h1v1h-1zM419 263h1v1h-1zM419 273h1v1h-1zM419 283h1v1h-1zM419 293h1v1h-1zM419 303h1v1h-1zM419 313h1v1h-1zM419 323h1v1h-1zM419 333h1v1h-1zM419 343h1v1h-1zM419 353h1v1h-1zM419 363h1v1h-1zM419 373h1v1h-1zM419 383h1v1h-1zM419 393h1v1h-1zM419 403h1v1h-1zM419 413h1v1h-1zM419 423h1v1h-1zM419 433h1v1h-1zM419 443h1v1h-1zM419 453h1v1h-1zM419 463h1v1h-1zM419 473h1v1h-1zM419 483h1v1h-1zM419 493h1v1h-1zM419 503h1v1h-1zM419 513h1v1h-1zM419 523h1v1h-1zM419 533h1v1h-1zM419 543h1v1h-1zM429 113h1v1h-1zM429 123h1v1h-1zM429 133h1v1h-1zM429 143h1v1h-1zM429 153h1v1h-1zM429 163h1v1h-1zM429 173h1v1h-1zM429 183h1v1h-1zM429 193h1v1h-1zM429 203h1v1h-1zM429 213h1v1h-1zM429 223h1v1h-1zM429 233h1v1h-1zM429 243h1v1h-1zM429 253h1v1h-1zM429 263h1v1h-1zM429 273h1v1h-1zM429 283h1v1h-1zM429 293h1v1h-1zM429 303h1v1h-1zM429 313h1v1h-1zM429 323h1v1h-1zM429 333h1v1h-1zM429 343h1v1h-1zM429 353h1v1h-1zM429 363h1v1h-1zM429 373h1v1h-1zM429 383h1v1h-1zM429 393h1v1h-1zM429 403h1v1h-1zM429 413h1v1h-1zM429 423h1v1h-1zM429 433h1v1h-1zM429 443h1v1h-1zM429 453h1v1h-1zM429 463h1v1h-1zM429 473h1v1h-1zM429 483h1v1h-1zM429 493h1v1h-1zM429 503h1v1h-1zM429 513h1v1h-1zM429 523h1v1h-1zM429 533h1v1h-1zM429 543h1v1h-1zM439 113h1v1h-1zM439 123h1v1h-1zM439 133h1v1h-1zM439 143h1v1h-1zM439 153h1v1h-1zM439 163h1v1h-1zM439 173h1v1h-1zM439 183h1v1h-1zM439 193h1v1h-1zM439 203h1v1h-1zM439 213h1v1h-1zM439 223h1v1h-1zM439 233h1v1h-1zM439 243h1v1h-1zM439 253h1v1h-1zM439 263h1v1h-1zM439 273h1v1h-1zM439 283h1v1h-1zM439 293h1v1h-1zM439 303h1v1h-1zM439 313h1v1h-1zM439 323h1v1h-1zM439 333h1v1h-1zM439 343h1v1h-1zM439 353h1v1h-1zM439 363h1v1h-1zM439 373h1v1h-1zM439 383h1v1h-1zM439 393h1v1h-1zM439 403h1v1h-1zM439 413h1v1h-1zM439 423h1v1h-1zM439 433h1v1h-1zM439 443h1v1h-1zM439 453h1v1h-1zM439 463h1v1h-1zM439 473h1v1h-1zM439 483h1v1h-1zM439 493h1v1h-1zM439 503h1v1h-1zM439 513h1v1h-1zM439 523h1v1h-1zM439 533h1v1h-1zM439 543h1v1h-1zM449 113h1v1h-1zM449 123h1v1h-1zM449 133h1v1h-1zM449 143h1v1h-1zM449 153h1v1h-1zM449 163h1v1h-1zM449 173h1v1h-1zM449 183h1v1h-1zM449 193h1v1h-1zM449 203h1v1h-1zM449 213h1v1h-1zM449 223h1v1h-1zM449 233h1v1h-1zM449 243h1v1h-1zM449 253h1v1h-1zM449 263h1v1h-1zM449 273h1v1h-1zM449 283h1v1h-1zM449 293h1v1h-1zM449 303h1v1h-1zM449 313h1v1h-1zM449 323h1v1h-1zM449 333h1v1h-1zM449 343h1v1h-1zM449 353h1v1h-1zM449 363h1v1h-1zM449 373h1v1h-1zM449 383h1v1h-1zM449 393h1v1h-1zM449 403h1v1h-1zM449 413h1v1h-1zM449 423h1v1h-1zM449 433h1v1h-1zM449 443h1v1h-1zM449 453h1v1h-1zM449 463h1v1h-1zM449 473h1v1h-1zM449 483h1v1h-1zM449 493h1v1h-1zM449 503h1v1h-1zM449 513h1v1h-1zM449 523h1v1h-1zM449 533h1v1h-1zM449 543h1v1h-1zM459 113h1v1h-1zM459 123h1v1h-1zM459 133h1v1h-1zM459 143h1v1h-1zM459 153h1v1h-1zM459 163h1v1h-1zM459 173h1v1h-1zM459 183h1v1h-1zM459 193h1v1h-1zM459 203h1v1h-1zM459 213h1v1h-1zM459 223h1v1h-1zM459 233h1v1h-1zM459 243h1v1h-1zM459 253h1v1h-1zM459 263h1v1h-1zM459 273h1v1h-1zM459 283h1v1h-1zM459 293h1v1h-1zM459 303h1v1h-1zM459 313h1v1h-1zM459 323h1v1h-1zM459 333h1v1h-1zM459 343h1v1h-1zM459 353h1v1h-1zM459 363h1v1h-1zM459 373h1v1h-1zM459 383h1v1h-1zM459 393h1v1h-1zM459 403h1v1h-1zM459 413h1v1h-1zM459 423h1v1h-1zM459 433h1v1h-1zM459 443h1v1h-1zM459 453h1v1h-1zM459 463h1v1h-1zM459 473h1v1h-1zM459 483h1v1h-1zM459 493h1v1h-1zM459 503h1v1h-1zM459 513h1v1h-1zM459 523h1v1h-1zM459 533h1v1h-1zM459 543h1v1h-1zM469 113h1v1h-1zM469 123h1v1h-1zM469 133h1v1h-1zM469 143h1v1h-1zM469 153h1v1h-1zM469 163h1v1h-1zM469 173h1v1h-1zM469 183h1v1h-1zM469 193h1v1h-1zM469 203h1v1h-1zM469 213h1v1h-1zM469 223h1v1h-1zM469 233h1v1h-1zM469 243h1v1h-1zM469 253h1v1h-1zM469 263h1v1h-1zM469 273h1v1h-1zM469 283h1v1h-1zM469 293h1v1h-1zM469 303h1v1h-1zM469 313h1v1h-1zM469 323h1v1h-1zM469 333h1v1h-1zM469 343h1v1h-1zM469 353h1v1h-1zM469 363h1v1h-1zM469 373h1v1h-1zM469 383h1v1h-1zM469 393h1v1h-1zM469 403h1v1h-1zM469 413h1v1h-1zM469 423h1v1h-1zM469 433h1v1h-1zM469 443h1v1h-1zM469 453h1v1h-1zM469 463h1v1h-1zM469 473h1v1h-1zM469 483h1v1h-1zM469 493h1v1h-1zM469 503h1v1h-1zM469 513h1v1h-1zM469 523h1v1h-1zM469 533h1v1h-1zM469 543h1v1h-1zM479 113h1v1h-1zM479 123h1v1h-1zM479 133h1v1h-1zM479 143h1v1h-1zM479 153h1v1h-1zM479 163h1v1h-1zM479 173h1v1h-1zM479 183h1v1h-1zM479 193h1v1h-1zM479 203h1v1h-1zM479 213h1v1h-1zM479 223h1v1h-1zM479 233h1v1h-1zM479 243h1v1h-1zM479 253h1v1h-1zM479 263h1v1h-1zM479 273h1v1h-1zM479 283h1v1h-1zM479 293h1v1h-1zM479 303h1v1h-1zM479 313h1v1h-1zM479 323h1v1h-1zM479 333h1v1h-1zM479 343h1v1h-1zM479 353h1v1h-1zM479 363h1v1h-1zM479 373h1v1h-1zM479 383h1v1h-1zM479 393h1v1h-1zM479 403h1v1h-1zM479 413h1v1h-1zM479 423h1v1h-1zM479 433h1v1h-1zM479 443h1v1h-1zM479 453h1v1h-1zM479 463h1v1h-1zM479 473h1v1h-1zM479 483h1v1h-1zM479 493h1v1h-1zM479 503h1v1h-1zM479 513h1v1h-1zM479 523h1v1h-1zM479 533h1v1h-1zM479 543h1v1h-1zM489 113h1v1h-1zM489 123h1v1h-1zM489 133h1v1h-1zM489 143h1v1h-1zM489 153h1v1h-1zM489 163h1v1h-1zM489 173h1v1h-1zM489 183h1v1h-1zM489 193h1v1h-1zM489 203h1v1h-1zM489 213h1v1h-1zM489 223h1v1h-1zM489 233h1v1h-1zM489 243h1v1h-1zM489 253h1v1h-1zM489 263h1v1h-1zM489 273h1v1h-1zM489 283h1v1h-1zM489 293h1v1h-1zM489 303h1v1h-1zM489 313h1v1h-1zM489 323h1v1h-1zM489 333h1v1h-1zM489 343h1v1h-1zM489 353h1v1h-1zM489 363h1v1h-1zM489 373h1v1h-1zM489 383h1v1h-1zM489 393h1v1h-1zM489 403h1v1h-1zM489 413h1v1h-1zM489 423h1v1h-1zM489 433h1v1h-1zM489 443h1v1h-1zM489 453h1v1h-1zM489 463h1v1h-1zM489 473h1v1h-1zM489 483h1v1h-1zM489 493h1v1h-1zM489 503h1v1h-1zM489 513h1v1h-1zM489 523h1v1h-1zM489 533h1v1h-1zM489 543h1v1h-1zM499 113h1v1h-1zM499 123h1v1h-1zM499 133h1v1h-1zM499 143h1v1h-1zM499 153h1v1h-1zM499 163h1v1h-1zM499 173h1v1h-1zM499 183h1v1h-1zM499 193h1v1h-1zM499 203h1v1h-1zM499 213h1v1h-1zM499 223h1v1h-1zM499 233h1v1h-1zM499 243h1v1h-1zM499 253h1v1h-1zM499 263h1v1h-1zM499 273h1v1h-1zM499 283h1v1h-1zM499 293h1v1h-1zM499 303h1v1h-1zM499 313h1v1h-1zM499 323h1v1h-1zM499 333h1v1h-1zM499 343h1v1h-1zM499 353h1v1h-1zM499 363h1v1h-1zM499 373h1v1h-1zM499 383h1v1h-1zM499 393h1v1h-1zM499 403h1v1h-1zM499 413h1v1h-1zM499 423h1v1h-1zM499 433h1v1h-1zM499 443h1v1h-1zM499 453h1v1h-1zM499 463h1v1h-1zM499 473h1v1h-1zM499 483h1v1h-1zM499 493h1v1h-1zM499 503h1v1h-1zM499 513h1v1h-1zM499 523h1v1h-1zM499 533h1v1h-1zM499 543h1v1h-1zM509 113h1v1h-1zM509 123h1v1h-1zM509 133h1v1h-1zM509 143h1v1h-1zM509 153h1v1h-1zM509 163h1v1h-1zM509 173h1v1h-1zM509 183h1v1h-1zM509 193h1v1h-1zM509 203h1v1h-1zM509 213h1v1h-1zM509 223h1v1h-1zM509 233h1v1h-1zM509 243h1v1h-1zM509 253h1v1h-1zM509 263h1v1h-1zM509 273h1v1h-1zM509 283h1v1h-1zM509 293h1v1h-1zM509 303h1v1h-1zM509 313h1v1h-1zM509 323h1v1h-1zM509 333h1v1h-1zM509 343h1v1h-1zM509 353h1v1h-1zM509 363h1v1h-1zM509 373h1v1h-1zM509 383h1v1h-1zM509 393h1v1h-1zM509 403h1v1h-1zM509 413h1v1h-1zM509 423h1v1h-1zM509 433h1v1h-1zM509 443h1v1h-1zM509 453h1v1h-1zM509 463h1v1h-1zM509 473h1v1h-1zM509 483h1v1h-1zM509 493h1v1h-1zM509 503h1v1h-1zM509 513h1v1h-1zM509 523h1v1h-1zM509 533h1v1h-1zM509 543h1v1h-1zM519 113h1v1h-1zM519 123h1v1h-1zM519 133h1v1h-1zM519 143h1v1h-1zM519 153h1v1h-1zM519 163h1v1h-1zM519 173h1v1h-1zM519 183h1v1h-1zM519 193h1v1h-1zM519 203h1v1h-1zM519 213h1v1h-1zM519 223h1v1h-1zM519 233h1v1h-1zM519 243h1v1h-1zM519 253h1v1h-1zM519 263h1v1h-1zM519 273h1v1h-1zM519 283h1v1h-1zM519 293h1v1h-1zM519 303h1v1h-1zM519 313h1v1h-1zM519 323h1v1h-1zM519 333h1v1h-1zM519 343h1v1h-1zM519 353h1v1h-1zM519 363h1v1h-1zM519 373h1v1h-1zM519 383h1v1h-1zM519 393h1v1h-1zM519 403h1v1h-1zM519 413h1v1h-1zM519 423h1v1h-1zM519 433h1v1h-1zM519 443h1v1h-1zM519 453h1v1h-1zM519 463h1v1h-1zM519 473h1v1h-1zM519 483h1v1h-1zM519 493h1v1h-1zM519 503h1v1h-1zM519 513h1v1h-1zM519 523h1v1h-1zM519 533h1v1h-1zM519 543h1v1h-1z" fill="#000"/><rect x="204" y="118" width="321" height="21" fill="#fff"/><rect x="204" y="118" width="21" height="425" fill="#fff"/><path d="M204.5 118V543M204 118.5H525M224.5 118V543M204 138.5H525M274.5 118V138M324.5 118V138M374.5 118V138M424.5 118V138M474.5 118V138M524.5 118V138M204 218.5H225M204 298.5H225M204 378.5H225M204 458.5H225M204 538.5H225" stroke="#000" stroke-width="1" fill="none"/></svg>
<div class="t" style="left:224px;top:122px;width:50px;text-align:center;font-size:12px">1</div><div class="t" style="left:274px;top:122px;width:50px;text-align:center;font-size:12px">2</div><div class="t" style="left:324px;top:122px;width:50px;text-align:center;font-size:12px">3</div><div class="t" style="left:374px;top:122px;width:50px;text-align:center;font-size:12px">4</div><div class="t" style="left:424px;top:122px;width:50px;text-align:center;font-size:12px">5</div><div class="t" style="left:474px;top:122px;width:50px;text-align:center;font-size:12px">6</div><div class="t" style="left:204px;top:172px;width:20px;text-align:center;font-size:12px">A</div><div class="t" style="left:204px;top:252px;width:20px;text-align:center;font-size:12px">B</div><div class="t" style="left:204px;top:332px;width:20px;text-align:center;font-size:12px">C</div><div class="t" style="left:204px;top:412px;width:20px;text-align:center;font-size:12px">D</div><div class="t" style="left:204px;top:492px;width:20px;text-align:center;font-size:12px">E</div>
<!-- vertical scrollbar -->
<div class="a chk" style="left:525px;top:113px;width:16px;height:430px"></div>
<div class="btn" style="left:525px;top:113px;width:16px;height:16px"></div>
<div class="a" style="left:525px;top:128px;width:16px;height:2px;background:#8E8B7E"></div>
<div class="a" style="left:525px;top:130px;width:16px;height:292px;border:1px solid #8E8B7E;border-top:none;border-radius:0 0 3px 3px;background:linear-gradient(90deg,#FCFBF1,#E6E3D3)"></div>
<div class="btn" style="left:525px;top:511px;width:16px;height:16px"></div>
<div class="btn" style="left:525px;top:526px;width:16px;height:17px"></div>
<!-- horizontal scrollbar -->
<div class="a chk" style="left:199px;top:543px;width:326px;height:16px"></div>
<div class="btn" style="left:199px;top:543px;width:16px;height:16px"></div>
<div class="a" style="left:214px;top:543px;width:2px;height:16px;background:#8E8B7E"></div>
<div class="a" style="left:216px;top:543px;width:115px;height:16px;border:1px solid #8E8B7E;border-left:none;border-radius:0 3px 3px 0;background:linear-gradient(#FCFBF1,#E6E3D3)"></div>
<div class="btn" style="left:493px;top:543px;width:17px;height:16px"></div>
<div class="btn" style="left:509px;top:543px;width:16px;height:16px"></div>
<div class="a" style="left:525px;top:543px;width:16px;height:16px;background:#ECE9D8"></div>
<svg class="a" style="left:0;top:0" width="710" height="581">
<rect x="264" y="546" width="2" height="2" fill="#BAB7A8"/><rect x="265" y="547" width="1" height="1" fill="#fff"/><rect x="528" y="267" width="2" height="2" fill="#BAB7A8"/><rect x="529" y="268" width="1" height="1" fill="#fff"/><rect x="264" y="550" width="2" height="2" fill="#BAB7A8"/><rect x="265" y="551" width="1" height="1" fill="#fff"/><rect x="532" y="267" width="2" height="2" fill="#BAB7A8"/><rect x="533" y="268" width="1" height="1" fill="#fff"/><rect x="264" y="554" width="2" height="2" fill="#BAB7A8"/><rect x="265" y="555" width="1" height="1" fill="#fff"/><rect x="536" y="267" width="2" height="2" fill="#BAB7A8"/><rect x="537" y="268" width="1" height="1" fill="#fff"/><rect x="268" y="546" width="2" height="2" fill="#BAB7A8"/><rect x="269" y="547" width="1" height="1" fill="#fff"/><rect x="528" y="271" width="2" height="2" fill="#BAB7A8"/><rect x="529" y="272" width="1" height="1" fill="#fff"/><rect x="268" y="550" width="2" height="2" fill="#BAB7A8"/><rect x="269" y="551" width="1" height="1" fill="#fff"/><rect x="532" y="271" width="2" height="2" fill="#BAB7A8"/><rect x="533" y="272" width="1" height="1" fill="#fff"/><rect x="268" y="554" width="2" height="2" fill="#BAB7A8"/><rect x="269" y="555" width="1" height="1" fill="#fff"/><rect x="536" y="271" width="2" height="2" fill="#BAB7A8"/><rect x="537" y="272" width="1" height="1" fill="#fff"/><rect x="272" y="546" width="2" height="2" fill="#BAB7A8"/><rect x="273" y="547" width="1" height="1" fill="#fff"/><rect x="528" y="275" width="2" height="2" fill="#BAB7A8"/><rect x="529" y="276" width="1" height="1" fill="#fff"/><rect x="272" y="550" width="2" height="2" fill="#BAB7A8"/><rect x="273" y="551" width="1" height="1" fill="#fff"/><rect x="532" y="275" width="2" height="2" fill="#BAB7A8"/><rect x="533" y="276" width="1" height="1" fill="#fff"/><rect x="272" y="554" width="2" height="2" fill="#BAB7A8"/><rect x="273" y="555" width="1" height="1" fill="#fff"/><rect x="536" y="275" width="2" height="2" fill="#BAB7A8"/><rect x="537" y="276" width="1" height="1" fill="#fff"/><rect x="276" y="546" width="2" height="2" fill="#BAB7A8"/><rect x="277" y="547" width="1" height="1" fill="#fff"/><rect x="528" y="279" width="2" height="2" fill="#BAB7A8"/><rect x="529" y="280" width="1" height="1" fill="#fff"/><rect x="276" y="550" width="2" height="2" fill="#BAB7A8"/><rect x="277" y="551" width="1" height="1" fill="#fff"/><rect x="532" y="279" width="2" height="2" fill="#BAB7A8"/><rect x="533" y="280" width="1" height="1" fill="#fff"/><rect x="276" y="554" width="2" height="2" fill="#BAB7A8"/><rect x="277" y="555" width="1" height="1" fill="#fff"/><rect x="536" y="279" width="2" height="2" fill="#BAB7A8"/><rect x="537" y="280" width="1" height="1" fill="#fff"/><rect x="280" y="546" width="2" height="2" fill="#BAB7A8"/><rect x="281" y="547" width="1" height="1" fill="#fff"/><rect x="528" y="283" width="2" height="2" fill="#BAB7A8"/><rect x="529" y="284" width="1" height="1" fill="#fff"/><rect x="280" y="550" width="2" height="2" fill="#BAB7A8"/><rect x="281" y="551" width="1" height="1" fill="#fff"/><rect x="532" y="283" width="2" height="2" fill="#BAB7A8"/><rect x="533" y="284" width="1" height="1" fill="#fff"/><rect x="280" y="554" width="2" height="2" fill="#BAB7A8"/><rect x="281" y="555" width="1" height="1" fill="#fff"/><rect x="536" y="283" width="2" height="2" fill="#BAB7A8"/><rect x="537" y="284" width="1" height="1" fill="#fff"/><path d="M528.5 122L532.5 118L536.5 122Z" fill="#000"/>
<path d="M528.5 520.2L532.5 516L536.5 520.2Z" fill="#000"/>
<path d="M528.5 531.8L536.5 531.8L532.5 536Z" fill="#000"/>
<path d="M209.2 547L205 551L209.2 555Z" fill="#000"/>
<path d="M502.2 547L498 551L502.2 555Z" fill="#000"/>
<path d="M514 547L518.2 551L514 555Z" fill="#000"/>
</svg>
<!-- splitter grips -->
<svg class="a" style="left:0;top:0" width="710" height="581">
<rect x="191" y="229" width="2" height="2" fill="#BDB9A8"/><rect x="192" y="230" width="2" height="2" fill="#fff"/><rect x="547" y="229" width="2" height="2" fill="#BDB9A8"/><rect x="548" y="230" width="2" height="2" fill="#fff"/><rect x="191" y="234" width="2" height="2" fill="#BDB9A8"/><rect x="192" y="235" width="2" height="2" fill="#fff"/><rect x="547" y="234" width="2" height="2" fill="#BDB9A8"/><rect x="548" y="235" width="2" height="2" fill="#fff"/><rect x="191" y="239" width="2" height="2" fill="#BDB9A8"/><rect x="192" y="240" width="2" height="2" fill="#fff"/><rect x="547" y="239" width="2" height="2" fill="#BDB9A8"/><rect x="548" y="240" width="2" height="2" fill="#fff"/><rect x="191" y="244" width="2" height="2" fill="#BDB9A8"/><rect x="192" y="245" width="2" height="2" fill="#fff"/><rect x="547" y="244" width="2" height="2" fill="#BDB9A8"/><rect x="548" y="245" width="2" height="2" fill="#fff"/><rect x="191" y="249" width="2" height="2" fill="#BDB9A8"/><rect x="192" y="250" width="2" height="2" fill="#fff"/><rect x="547" y="249" width="2" height="2" fill="#BDB9A8"/><rect x="548" y="250" width="2" height="2" fill="#fff"/><rect x="191" y="254" width="2" height="2" fill="#BDB9A8"/><rect x="192" y="255" width="2" height="2" fill="#fff"/><rect x="547" y="254" width="2" height="2" fill="#BDB9A8"/><rect x="548" y="255" width="2" height="2" fill="#fff"/><rect x="191" y="259" width="2" height="2" fill="#BDB9A8"/><rect x="192" y="260" width="2" height="2" fill="#fff"/><rect x="547" y="259" width="2" height="2" fill="#BDB9A8"/><rect x="548" y="260" width="2" height="2" fill="#fff"/><rect x="191" y="264" width="2" height="2" fill="#BDB9A8"/><rect x="192" y="265" width="2" height="2" fill="#fff"/><rect x="547" y="264" width="2" height="2" fill="#BDB9A8"/><rect x="548" y="265" width="2" height="2" fill="#fff"/><rect x="191" y="269" width="2" height="2" fill="#BDB9A8"/><rect x="192" y="270" width="2" height="2" fill="#fff"/><rect x="547" y="269" width="2" height="2" fill="#BDB9A8"/><rect x="548" y="270" width="2" height="2" fill="#fff"/><rect x="191" y="274" width="2" height="2" fill="#BDB9A8"/><rect x="192" y="275" width="2" height="2" fill="#fff"/><rect x="547" y="274" width="2" height="2" fill="#BDB9A8"/><rect x="548" y="275" width="2" height="2" fill="#fff"/><rect x="191" y="279" width="2" height="2" fill="#BDB9A8"/><rect x="192" y="280" width="2" height="2" fill="#fff"/><rect x="547" y="279" width="2" height="2" fill="#BDB9A8"/><rect x="548" y="280" width="2" height="2" fill="#fff"/><rect x="191" y="284" width="2" height="2" fill="#BDB9A8"/><rect x="192" y="285" width="2" height="2" fill="#fff"/><rect x="547" y="284" width="2" height="2" fill="#BDB9A8"/><rect x="548" y="285" width="2" height="2" fill="#fff"/><rect x="191" y="289" width="2" height="2" fill="#BDB9A8"/><rect x="192" y="290" width="2" height="2" fill="#fff"/><rect x="547" y="289" width="2" height="2" fill="#BDB9A8"/><rect x="548" y="290" width="2" height="2" fill="#fff"/><rect x="191" y="294" width="2" height="2" fill="#BDB9A8"/><rect x="192" y="295" width="2" height="2" fill="#fff"/><rect x="547" y="294" width="2" height="2" fill="#BDB9A8"/><rect x="548" y="295" width="2" height="2" fill="#fff"/><rect x="191" y="299" width="2" height="2" fill="#BDB9A8"/><rect x="192" y="300" width="2" height="2" fill="#fff"/><rect x="547" y="299" width="2" height="2" fill="#BDB9A8"/><rect x="548" y="300" width="2" height="2" fill="#fff"/><rect x="191" y="304" width="2" height="2" fill="#BDB9A8"/><rect x="192" y="305" width="2" height="2" fill="#fff"/><rect x="547" y="304" width="2" height="2" fill="#BDB9A8"/><rect x="548" y="305" width="2" height="2" fill="#fff"/><rect x="191" y="309" width="2" height="2" fill="#BDB9A8"/><rect x="192" y="310" width="2" height="2" fill="#fff"/><rect x="547" y="309" width="2" height="2" fill="#BDB9A8"/><rect x="548" y="310" width="2" height="2" fill="#fff"/><rect x="191" y="314" width="2" height="2" fill="#BDB9A8"/><rect x="192" y="315" width="2" height="2" fill="#fff"/><rect x="547" y="314" width="2" height="2" fill="#BDB9A8"/><rect x="548" y="315" width="2" height="2" fill="#fff"/><rect x="191" y="319" width="2" height="2" fill="#BDB9A8"/><rect x="192" y="320" width="2" height="2" fill="#fff"/><rect x="547" y="319" width="2" height="2" fill="#BDB9A8"/><rect x="548" y="320" width="2" height="2" fill="#fff"/><rect x="191" y="324" width="2" height="2" fill="#BDB9A8"/><rect x="192" y="325" width="2" height="2" fill="#fff"/><rect x="547" y="324" width="2" height="2" fill="#BDB9A8"/><rect x="548" y="325" width="2" height="2" fill="#fff"/><rect x="191" y="329" width="2" height="2" fill="#BDB9A8"/><rect x="192" y="330" width="2" height="2" fill="#fff"/><rect x="547" y="329" width="2" height="2" fill="#BDB9A8"/><rect x="548" y="330" width="2" height="2" fill="#fff"/><rect x="191" y="334" width="2" height="2" fill="#BDB9A8"/><rect x="192" y="335" width="2" height="2" fill="#fff"/><rect x="547" y="334" width="2" height="2" fill="#BDB9A8"/><rect x="548" y="335" width="2" height="2" fill="#fff"/><rect x="191" y="339" width="2" height="2" fill="#BDB9A8"/><rect x="192" y="340" width="2" height="2" fill="#fff"/><rect x="547" y="339" width="2" height="2" fill="#BDB9A8"/><rect x="548" y="340" width="2" height="2" fill="#fff"/><rect x="191" y="344" width="2" height="2" fill="#BDB9A8"/><rect x="192" y="345" width="2" height="2" fill="#fff"/><rect x="547" y="344" width="2" height="2" fill="#BDB9A8"/><rect x="548" y="345" width="2" height="2" fill="#fff"/><rect x="191" y="349" width="2" height="2" fill="#BDB9A8"/><rect x="192" y="350" width="2" height="2" fill="#fff"/><rect x="547" y="349" width="2" height="2" fill="#BDB9A8"/><rect x="548" y="350" width="2" height="2" fill="#fff"/><rect x="191" y="354" width="2" height="2" fill="#BDB9A8"/><rect x="192" y="355" width="2" height="2" fill="#fff"/><rect x="547" y="354" width="2" height="2" fill="#BDB9A8"/><rect x="548" y="355" width="2" height="2" fill="#fff"/><rect x="191" y="359" width="2" height="2" fill="#BDB9A8"/><rect x="192" y="360" width="2" height="2" fill="#fff"/><rect x="547" y="359" width="2" height="2" fill="#BDB9A8"/><rect x="548" y="360" width="2" height="2" fill="#fff"/><rect x="191" y="364" width="2" height="2" fill="#BDB9A8"/><rect x="192" y="365" width="2" height="2" fill="#fff"/><rect x="547" y="364" width="2" height="2" fill="#BDB9A8"/><rect x="548" y="365" width="2" height="2" fill="#fff"/><rect x="191" y="369" width="2" height="2" fill="#BDB9A8"/><rect x="192" y="370" width="2" height="2" fill="#fff"/><rect x="547" y="369" width="2" height="2" fill="#BDB9A8"/><rect x="548" y="370" width="2" height="2" fill="#fff"/><rect x="191" y="374" width="2" height="2" fill="#BDB9A8"/><rect x="192" y="375" width="2" height="2" fill="#fff"/><rect x="547" y="374" width="2" height="2" fill="#BDB9A8"/><rect x="548" y="375" width="2" height="2" fill="#fff"/><rect x="191" y="379" width="2" height="2" fill="#BDB9A8"/><rect x="192" y="380" width="2" height="2" fill="#fff"/><rect x="547" y="379" width="2" height="2" fill="#BDB9A8"/><rect x="548" y="380" width="2" height="2" fill="#fff"/><rect x="191" y="384" width="2" height="2" fill="#BDB9A8"/><rect x="192" y="385" width="2" height="2" fill="#fff"/><rect x="547" y="384" width="2" height="2" fill="#BDB9A8"/><rect x="548" y="385" width="2" height="2" fill="#fff"/><rect x="191" y="389" width="2" height="2" fill="#BDB9A8"/><rect x="192" y="390" width="2" height="2" fill="#fff"/><rect x="547" y="389" width="2" height="2" fill="#BDB9A8"/><rect x="548" y="390" width="2" height="2" fill="#fff"/><path d="M699.5 581L710 570.5M703.5 581L710 574.5M707.5 581L710 578.5" stroke="#fff" stroke-width="1"/><path d="M700.5 581L710 571.5M701.5 581L710 572.5M704.5 581L710 575.5M705.5 581L710 576.5M708.5 581L710 579.5" stroke="#A7A493" stroke-width="1"/>
</svg>
<!-- right dock -->
<div class="a" style="left:551px;top:83px;width:159px;height:480px;background:#fff;border:1px solid #A5A290;border-right-color:#DCD9C9;border-bottom-color:#B8B5A4;border-radius:2px 0 0 0;box-shadow:inset 0 -1px 0 #E4E1D2"></div>
<div class="a" style="left:552px;top:84px;width:158px;height:15px;background:#ECE9D8"></div>
<div class="t" style="left:556px;top:86px;letter-spacing:-0.15px">Aucune modification</div>
</body></html>
